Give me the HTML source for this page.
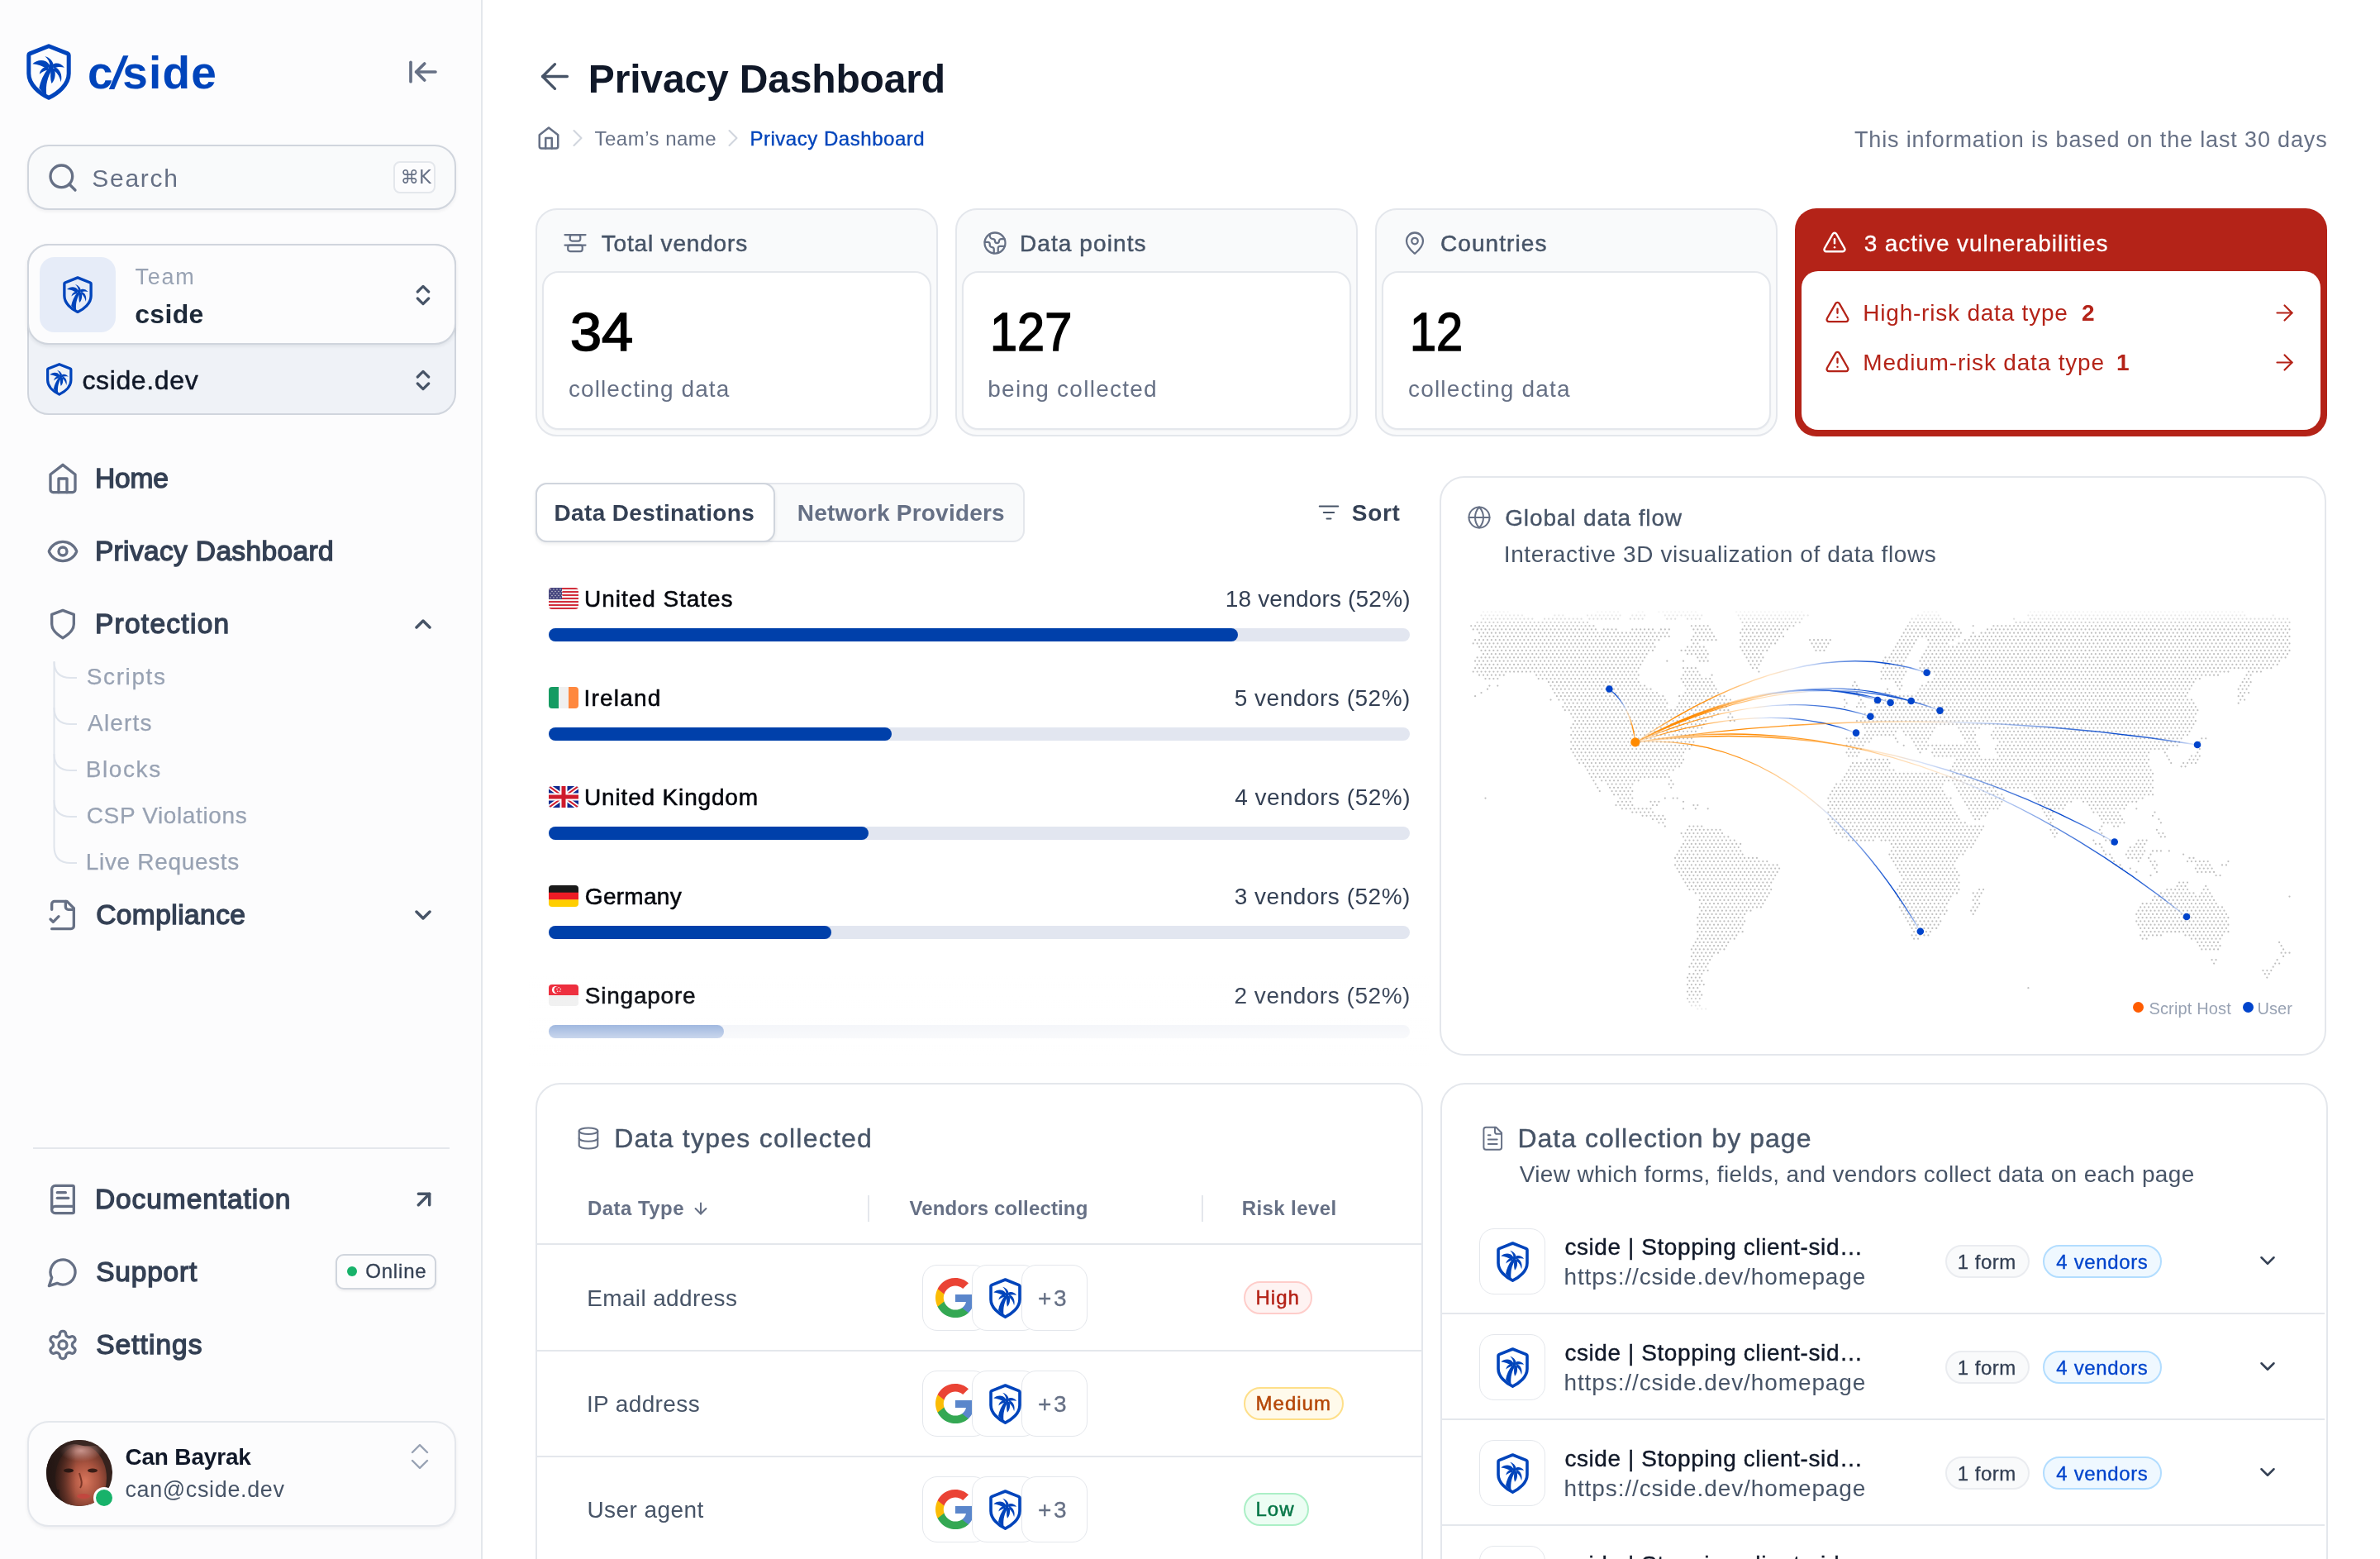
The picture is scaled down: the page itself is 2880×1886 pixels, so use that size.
<!DOCTYPE html>
<html lang="en"><head><meta charset="utf-8"><title>Privacy Dashboard</title>
<style>
html,body{margin:0;padding:0;background:#fff}
body{width:2880px;height:1886px;overflow:hidden;position:relative;font-family:"Liberation Sans",Arial,sans-serif;-webkit-font-smoothing:antialiased}
aside,main{display:block;position:absolute;left:0;top:0;width:2880px;height:1886px;will-change:transform}
.a{position:absolute;display:block}
.t{position:absolute;white-space:nowrap;display:block}
b{font-weight:700}
</style></head><body>
<aside><div class="a" style="left:0px;top:0px;width:582px;height:1886px;background:#FCFCFD;border-right:2px solid #E4E7EC"></div><svg class="a" style="left:32px;top:53px" width="54" height="68.0" viewBox="0 0 54 68"><path d="M27 2.8 L50 11.9 Q51.2 12.4 51.2 13.8 V36 C51.2 49.5 38 60 27 65.3 C16 60 2.8 49.5 2.8 36 V13.8 Q2.8 12.4 4 11.9 Z" fill="none" stroke="#0044BB" stroke-width="5" stroke-linejoin="round"/><g fill="#0044BB"><path d="M15.3 53.5 C16.8 45.5 20.5 37 26.5 29.5 L31 31.5 C26 39 22.8 49.5 24.3 62 C20.5 59.8 17.3 56.5 15.3 53.5Z"/><path d="M7.4 24.2 C11 20.5 18 18.6 23 21.1 C25.5 22.4 27.5 24.5 28.5 27 L24.2 30.2 C20 26.7 14 24.9 7.4 24.2Z"/><path d="M22.4 14.9 C27.5 16.3 32.2 20.5 32.6 25.5 L28.4 26.2 C28 21.5 26 18 22.4 14.9Z"/><path d="M31.3 25.4 C35 22.2 41.5 22.8 45.9 28.7 C41.5 27.5 37 27.5 33 29.5Z"/><path d="M26 27.6 C21 27.6 16.3 31.5 15.8 36.7 C18.5 34 22 32.2 26.8 31.4Z"/><path d="M29.6 30 C29.1 36 28.6 42.5 30.4 48.1 C34.4 44 35.8 37 33.8 30Z"/><path d="M33.3 28 C39.7 29.3 44.2 37 41.7 46.2 C40.5 40.5 38 35.7 33.6 32.4Z"/><circle cx="29.6" cy="28.2" r="3.2"/></g></svg><span class="t" style="left:106px;top:53.0px;font-size:55px;line-height:70px;color:#0044BB;font-weight:700;letter-spacing:1.2px;">c<span style="display:inline-block;transform:skewX(-13deg);margin:0 -4.5px 0 -1.5px">/</span>side</span><svg class="a" style="left:492px;top:67px" width="40" height="40" viewBox="0 0 24 24" fill="none" stroke="#667085" stroke-width="2.2" stroke-linecap="round" stroke-linejoin="round" ><path d="M3 19V5"/><path d="m13 6-6 6 6 6"/><path d="M7 12h14"/></svg><div class="a" style="left:32.5px;top:175px;width:519px;height:78.5px;box-sizing:border-box;border:2px solid #D0D5DD;border-radius:26px;background:#F9FAFB;box-shadow:0 2px 4px rgba(16,24,40,.06)"></div><svg class="a" style="left:56px;top:195px" width="40" height="40" viewBox="0 0 24 24" fill="none" stroke="#667085" stroke-width="2" stroke-linecap="round" stroke-linejoin="round" ><path d="m21 21-4.34-4.34"/><circle cx="11" cy="11" r="8"/></svg><span class="t" style="left:111.25px;top:195.5px;font-size:30px;line-height:39px;color:#667085;letter-spacing:1.73px;">Search</span><div class="a" style="left:476.3px;top:194.5px;width:51px;height:39.5px;box-sizing:border-box;border:2px solid #E4E7EC;border-radius:8px;background:#FCFCFD"></div><span class="t" style="left:484.5px;top:200.0px;font-size:22.5px;line-height:29px;color:#667085;font-family:&quot;DejaVu Sans&quot;,&quot;Liberation Sans&quot;,sans-serif;">⌘K</span><div class="a" style="left:32.5px;top:294.5px;width:519px;height:207.5px;box-sizing:border-box;border:2px solid #D0D5DD;border-radius:26px;background:#EFF2F7"></div><div class="a" style="left:32.5px;top:294.5px;width:519px;height:122.8px;box-sizing:border-box;border:2px solid #D0D5DD;border-radius:26px;background:#FCFCFD;box-shadow:0 2px 4px rgba(16,24,40,.08)"></div><div class="a" style="left:48px;top:311px;width:92px;height:91px;border-radius:18px;background:#E6ECF8"></div><svg class="a" style="left:76px;top:334px" width="36" height="45.3" viewBox="0 0 54 68"><path d="M27 2.8 L50 11.9 Q51.2 12.4 51.2 13.8 V36 C51.2 49.5 38 60 27 65.3 C16 60 2.8 49.5 2.8 36 V13.8 Q2.8 12.4 4 11.9 Z" fill="none" stroke="#0044BB" stroke-width="5" stroke-linejoin="round"/><g fill="#0044BB"><path d="M15.3 53.5 C16.8 45.5 20.5 37 26.5 29.5 L31 31.5 C26 39 22.8 49.5 24.3 62 C20.5 59.8 17.3 56.5 15.3 53.5Z"/><path d="M7.4 24.2 C11 20.5 18 18.6 23 21.1 C25.5 22.4 27.5 24.5 28.5 27 L24.2 30.2 C20 26.7 14 24.9 7.4 24.2Z"/><path d="M22.4 14.9 C27.5 16.3 32.2 20.5 32.6 25.5 L28.4 26.2 C28 21.5 26 18 22.4 14.9Z"/><path d="M31.3 25.4 C35 22.2 41.5 22.8 45.9 28.7 C41.5 27.5 37 27.5 33 29.5Z"/><path d="M26 27.6 C21 27.6 16.3 31.5 15.8 36.7 C18.5 34 22 32.2 26.8 31.4Z"/><path d="M29.6 30 C29.1 36 28.6 42.5 30.4 48.1 C34.4 44 35.8 37 33.8 30Z"/><path d="M33.3 28 C39.7 29.3 44.2 37 41.7 46.2 C40.5 40.5 38 35.7 33.6 32.4Z"/><circle cx="29.6" cy="28.2" r="3.2"/></g></svg><span class="t" style="left:163.5px;top:317.5px;font-size:27px;line-height:35px;color:#98A2B3;letter-spacing:1.75px;">Team</span><span class="t" style="left:163.25px;top:359.0px;font-size:32px;line-height:42px;color:#1D2939;font-weight:700;letter-spacing:0.3px;">cside</span><svg class="a" style="left:496px;top:341px" width="32" height="32" viewBox="0 0 24 24" fill="none" stroke="#475467" stroke-width="2.4" stroke-linecap="round" stroke-linejoin="round" ><path d="m7 15 5 5 5-5"/><path d="m7 9 5-5 5 5"/></svg><svg class="a" style="left:56px;top:439px" width="31.5" height="39.7" viewBox="0 0 54 68"><path d="M27 2.8 L50 11.9 Q51.2 12.4 51.2 13.8 V36 C51.2 49.5 38 60 27 65.3 C16 60 2.8 49.5 2.8 36 V13.8 Q2.8 12.4 4 11.9 Z" fill="none" stroke="#0044BB" stroke-width="5.5" stroke-linejoin="round"/><g fill="#0044BB"><path d="M15.3 53.5 C16.8 45.5 20.5 37 26.5 29.5 L31 31.5 C26 39 22.8 49.5 24.3 62 C20.5 59.8 17.3 56.5 15.3 53.5Z"/><path d="M7.4 24.2 C11 20.5 18 18.6 23 21.1 C25.5 22.4 27.5 24.5 28.5 27 L24.2 30.2 C20 26.7 14 24.9 7.4 24.2Z"/><path d="M22.4 14.9 C27.5 16.3 32.2 20.5 32.6 25.5 L28.4 26.2 C28 21.5 26 18 22.4 14.9Z"/><path d="M31.3 25.4 C35 22.2 41.5 22.8 45.9 28.7 C41.5 27.5 37 27.5 33 29.5Z"/><path d="M26 27.6 C21 27.6 16.3 31.5 15.8 36.7 C18.5 34 22 32.2 26.8 31.4Z"/><path d="M29.6 30 C29.1 36 28.6 42.5 30.4 48.1 C34.4 44 35.8 37 33.8 30Z"/><path d="M33.3 28 C39.7 29.3 44.2 37 41.7 46.2 C40.5 40.5 38 35.7 33.6 32.4Z"/><circle cx="29.6" cy="28.2" r="3.2"/></g></svg><span class="t" style="left:99.4px;top:438.5px;font-size:32px;line-height:42px;color:#101828;letter-spacing:0.64px;-webkit-text-stroke:0.5px #101828;">cside.dev</span><svg class="a" style="left:496px;top:444px" width="32" height="32" viewBox="0 0 24 24" fill="none" stroke="#475467" stroke-width="2.4" stroke-linecap="round" stroke-linejoin="round" ><path d="m7 15 5 5 5-5"/><path d="m7 9 5-5 5 5"/></svg><svg class="a" style="left:56.0px;top:559.0px" width="40" height="40" viewBox="0 0 24 24" fill="none" stroke="#667085" stroke-width="2" stroke-linecap="round" stroke-linejoin="round" ><path d="m3 9 9-7 9 7v11a2 2 0 0 1-2 2H5a2 2 0 0 1-2-2z"/><polyline points="9 22 9 12 15 12 15 22"/></svg><span class="t" style="left:114.92px;top:558.3px;font-size:33.5px;line-height:42px;color:#344054;letter-spacing:-0.17px;-webkit-text-stroke:1.35px #344054;">Home</span><svg class="a" style="left:56.0px;top:647.0px" width="40" height="40" viewBox="0 0 24 24" fill="none" stroke="#667085" stroke-width="2" stroke-linecap="round" stroke-linejoin="round" ><path d="M2.062 12.348a1 1 0 0 1 0-.696 10.75 10.75 0 0 1 19.876 0 1 1 0 0 1 0 .696 10.75 10.75 0 0 1-19.876 0"/><circle cx="12" cy="12" r="3"/></svg><span class="t" style="left:114.92px;top:646.3px;font-size:33.5px;line-height:42px;color:#344054;letter-spacing:0.35px;-webkit-text-stroke:1.35px #344054;">Privacy Dashboard</span><svg class="a" style="left:56.0px;top:735.0px" width="40" height="40" viewBox="0 0 24 24" fill="none" stroke="#667085" stroke-width="2" stroke-linecap="round" stroke-linejoin="round" ><path d="M12 22s8-4 8-10V5l-8-3-8 3v7c0 6 8 10 8 10"/></svg><span class="t" style="left:114.92px;top:734.3px;font-size:33.5px;line-height:42px;color:#344054;letter-spacing:1.27px;-webkit-text-stroke:1.35px #344054;">Protection</span><svg class="a" style="left:56.0px;top:1087.0px" width="40" height="40" viewBox="0 0 24 24" fill="none" stroke="#667085" stroke-width="2" stroke-linecap="round" stroke-linejoin="round" ><path d="M4 22h14a2 2 0 0 0 2-2V7l-5-5H6a2 2 0 0 0-2 2v4"/><path d="M14 2v4a2 2 0 0 0 2 2h4"/><path d="m3 15 2 2 4-4"/></svg><span class="t" style="left:116.17px;top:1086.3px;font-size:33.5px;line-height:42px;color:#344054;letter-spacing:0.44px;-webkit-text-stroke:1.35px #344054;">Compliance</span><svg class="a" style="left:496px;top:739px" width="32" height="32" viewBox="0 0 24 24" fill="none" stroke="#475467" stroke-width="2.6" stroke-linecap="round" stroke-linejoin="round" ><path d="m18 15-6-6-6 6"/></svg><svg class="a" style="left:496px;top:1091px" width="32" height="32" viewBox="0 0 24 24" fill="none" stroke="#475467" stroke-width="2.6" stroke-linecap="round" stroke-linejoin="round" ><path d="m6 9 6 6 6-6"/></svg><svg class="a" style="left:56.8px;top:798px" width="50" height="260" viewBox="0 0 50 260" fill="none" stroke="#DFE4EC" stroke-width="2"><path d="M8.5 3 V226 Q8.5 246 28.5 246 H36"/><path d="M8.5 2 Q8.5 22 28.5 22 H36"/><path d="M8.5 58 Q8.5 78 28.5 78 H36"/><path d="M8.5 114 Q8.5 134 28.5 134 H36"/><path d="M8.5 170 Q8.5 190 28.5 190 H36"/></svg><span class="t" style="left:104.78px;top:801.0px;font-size:28px;line-height:36px;color:#98A2B3;letter-spacing:1.6px;-webkit-text-stroke:0.25px #98A2B3;">Scripts</span><span class="t" style="left:106.03px;top:857.0px;font-size:28px;line-height:36px;color:#98A2B3;letter-spacing:1.19px;-webkit-text-stroke:0.25px #98A2B3;">Alerts</span><span class="t" style="left:103.78px;top:913.0px;font-size:28px;line-height:36px;color:#98A2B3;letter-spacing:1.58px;-webkit-text-stroke:0.25px #98A2B3;">Blocks</span><span class="t" style="left:104.78px;top:969.0px;font-size:28px;line-height:36px;color:#98A2B3;letter-spacing:0.63px;-webkit-text-stroke:0.25px #98A2B3;">CSP Violations</span><span class="t" style="left:103.78px;top:1025.0px;font-size:28px;line-height:36px;color:#98A2B3;letter-spacing:0.67px;-webkit-text-stroke:0.25px #98A2B3;">Live Requests</span><div class="a" style="left:40px;top:1388px;width:504px;height:2px;background:#E4E7EC"></div><svg class="a" style="left:56.0px;top:1431.0px" width="40" height="40" viewBox="0 0 24 24" fill="none" stroke="#667085" stroke-width="2" stroke-linecap="round" stroke-linejoin="round" ><path d="M4 19.5v-15A2.5 2.5 0 0 1 6.5 2H19a1 1 0 0 1 1 1v18a1 1 0 0 1-1 1H6.5a1 1 0 0 1 0-5H20"/><path d="M8 11h8"/><path d="M8 7h6"/></svg><span class="t" style="left:114.92px;top:1430.3px;font-size:33.5px;line-height:42px;color:#344054;letter-spacing:0.93px;-webkit-text-stroke:1.35px #344054;">Documentation</span><svg class="a" style="left:56.0px;top:1519.0px" width="40" height="40" viewBox="0 0 24 24" fill="none" stroke="#667085" stroke-width="2" stroke-linecap="round" stroke-linejoin="round" ><path d="M7.9 20A9 9 0 1 0 4 16.1L2 22Z"/></svg><span class="t" style="left:116.17px;top:1518.3px;font-size:33.5px;line-height:42px;color:#344054;letter-spacing:0.8px;-webkit-text-stroke:1.35px #344054;">Support</span><svg class="a" style="left:56.0px;top:1607.0px" width="40" height="40" viewBox="0 0 24 24" fill="none" stroke="#667085" stroke-width="2" stroke-linecap="round" stroke-linejoin="round" ><path d="M12.22 2h-.44a2 2 0 0 0-2 2v.18a2 2 0 0 1-1 1.73l-.43.25a2 2 0 0 1-2 0l-.15-.08a2 2 0 0 0-2.73.73l-.22.38a2 2 0 0 0 .73 2.73l.15.1a2 2 0 0 1 1 1.72v.51a2 2 0 0 1-1 1.74l-.15.09a2 2 0 0 0-.73 2.73l.22.38a2 2 0 0 0 2.73.73l.15-.08a2 2 0 0 1 2 0l.43.25a2 2 0 0 1 1 1.73V20a2 2 0 0 0 2 2h.44a2 2 0 0 0 2-2v-.18a2 2 0 0 1 1-1.73l.43-.25a2 2 0 0 1 2 0l.15.08a2 2 0 0 0 2.73-.73l.22-.39a2 2 0 0 0-.73-2.73l-.15-.08a2 2 0 0 1-1-1.74v-.5a2 2 0 0 1 1-1.74l.15-.09a2 2 0 0 0 .73-2.73l-.22-.38a2 2 0 0 0-2.73-.73l-.15.08a2 2 0 0 1-2 0l-.43-.25a2 2 0 0 1-1-1.73V4a2 2 0 0 0-2-2z"/><circle cx="12" cy="12" r="3"/></svg><span class="t" style="left:116.17px;top:1606.3px;font-size:33.5px;line-height:42px;color:#344054;letter-spacing:1.05px;-webkit-text-stroke:1.35px #344054;">Settings</span><svg class="a" style="left:497px;top:1435px" width="32" height="32" viewBox="0 0 24 24" fill="none" stroke="#475467" stroke-width="2.6" stroke-linecap="round" stroke-linejoin="round" ><path d="M7 7h10v10"/><path d="M7 17 17 7"/></svg><div class="a" style="left:406px;top:1517px;width:122px;height:43px;box-sizing:border-box;border:2px solid #D0D5DD;border-radius:10px;background:#FCFCFD;box-shadow:0 2px 3px rgba(16,24,40,.06)"></div><div class="a" style="left:420px;top:1532px;width:12px;height:12px;border-radius:50%;background:#17B26A"></div><span class="t" style="left:442.25px;top:1522.0px;font-size:24px;line-height:31px;color:#344054;letter-spacing:0.8px;-webkit-text-stroke:0.3px #344054;">Online</span><div class="a" style="left:32.5px;top:1718.5px;width:519px;height:128px;box-sizing:border-box;border:2px solid #E4E7EC;border-radius:26px;background:#FCFCFD;box-shadow:0 2px 4px rgba(16,24,40,.06)"></div><svg class="a" style="left:56px;top:1742px" width="80" height="80" viewBox="0 0 80 80"><defs><clipPath id="av"><circle cx="40" cy="40" r="40"/></clipPath><radialGradient id="af" cx=".58" cy=".55" r=".6"><stop offset="0" stop-color="#d8765c"/><stop offset=".45" stop-color="#a9533f"/><stop offset="1" stop-color="#4a261d"/></radialGradient><radialGradient id="ah" cx=".5" cy=".5" r=".5"><stop offset="0" stop-color="#c9948c"/><stop offset="1" stop-color="#c9948c" stop-opacity="0"/></radialGradient><linearGradient id="as" x1="0" x2="1"><stop offset="0" stop-color="#1d1210" stop-opacity=".85"/><stop offset=".45" stop-color="#1d1210" stop-opacity="0"/></linearGradient></defs><g clip-path="url(#av)"><rect width="80" height="80" fill="#35221d"/><ellipse cx="42" cy="46" rx="31" ry="40" fill="url(#af)"/><ellipse cx="42" cy="13" rx="26" ry="13" fill="url(#ah)"/><path d="M0 0H80V14C66 2 52 10 40 6C26 2 12 12 4 30L0 40Z" fill="#3a2722"/><rect width="80" height="80" fill="url(#as)"/><ellipse cx="27" cy="37" rx="6" ry="2.6" fill="#2a1713"/><ellipse cx="56" cy="37" rx="6" ry="2.6" fill="#3a1d16"/><path d="M40 40C43 50 44 54 41 58" stroke="#7a3526" stroke-width="2" fill="none"/><ellipse cx="45" cy="68" rx="8" ry="3" fill="#c2473f"/><rect x="0" y="60" width="16" height="20" fill="#221613" opacity=".7"/></g></svg><div class="a" style="left:113px;top:1799px;width:20px;height:20px;border-radius:50%;background:#17B26A;border:3px solid #FCFCFD"></div><span class="t" style="left:151.4px;top:1744.5px;font-size:28px;line-height:36px;color:#101828;font-weight:700;letter-spacing:-0.18px;">Can Bayrak</span><span class="t" style="left:151.4px;top:1785.0px;font-size:27px;line-height:35px;color:#475467;letter-spacing:0.63px;">can@cside.dev</span><svg class="a" style="left:494px;top:1744px" width="28" height="36" viewBox="0 0 28 36" fill="none" stroke="#98A2B3" stroke-width="2.4" stroke-linecap="round" stroke-linejoin="round"><path d="M5 13 14 4 23 13"/><path d="M5 23 14 32 23 23"/></svg></aside>
<main><svg class="a" style="left:646.3px;top:66.7px" width="51" height="51" viewBox="0 0 24 24" fill="none" stroke="#475467" stroke-width="1.55" stroke-linecap="round" stroke-linejoin="round" ><path d="m12 19-7-7 7-7"/><path d="M19 12H5"/></svg><span class="t" style="left:711.8px;top:66.0px;font-size:48px;line-height:60px;color:#101828;font-weight:700;letter-spacing:-0.16px;">Privacy Dashboard</span><svg class="a" style="left:649px;top:151.5px" width="30" height="30" viewBox="0 0 24 24" fill="none" stroke="#667085" stroke-width="2" stroke-linecap="round" stroke-linejoin="round" ><path d="m3 9 9-7 9 7v11a2 2 0 0 1-2 2H5a2 2 0 0 1-2-2z"/><polyline points="9 22 9 12 15 12 15 22"/></svg><svg class="a" style="left:681.4px;top:148.7px" width="36" height="36" viewBox="0 0 24 24" fill="none" stroke="#D0D5DD" stroke-width="1.4" stroke-linecap="round" stroke-linejoin="round" ><path d="m9 18 6-6-6-6"/></svg><span class="t" style="left:719.5px;top:151.5px;font-size:24px;line-height:31px;color:#667085;letter-spacing:0.49px;">Team’s name</span><svg class="a" style="left:869.4px;top:148.7px" width="36" height="36" viewBox="0 0 24 24" fill="none" stroke="#D0D5DD" stroke-width="1.4" stroke-linecap="round" stroke-linejoin="round" ><path d="m9 18 6-6-6-6"/></svg><span class="t" style="left:907.42px;top:151.5px;font-size:24px;line-height:31px;color:#0044BB;letter-spacing:0.53px;-webkit-text-stroke:0.35px #0044BB;">Privacy Dashboard</span><span class="t" style="left:2244.0px;top:152.0px;font-size:27px;line-height:35px;color:#667085;letter-spacing:0.85px;">This information is based on the last 30 days</span><div class="a" style="left:648px;top:252px;width:487.2px;height:276px;box-sizing:border-box;border:2px solid #E4E7EC;border-radius:26px;background:#F9FAFB"></div><div class="a" style="left:656px;top:328px;width:471.2px;height:192px;box-sizing:border-box;border:2px solid #E4E7EC;border-radius:20px;background:#fff;box-shadow:0 1px 2px rgba(16,24,40,.04)"></div><svg class="a" style="left:680.5px;top:279.0px" width="30" height="30" viewBox="0 0 24 24" fill="none" stroke="#667085" stroke-width="1.8" stroke-linecap="round" stroke-linejoin="round" ><rect width="14" height="6" x="5" y="14" rx="2"/><rect width="10" height="6" x="7" y="4" rx="2"/><path d="M2 14h20"/><path d="M2 4h20"/></svg><span class="t" style="left:727.75px;top:277.0px;font-size:28px;line-height:36px;color:#475467;letter-spacing:0.82px;-webkit-text-stroke:0.5px #475467;">Total vendors</span><span class="t" style="left:689.5px;top:364.0px;font-size:64px;line-height:76px;color:#000;-webkit-text-stroke:1.6px #000;transform-origin:0 50%;transform:scaleX(1.070);">34</span><span class="t" style="left:688.0px;top:453.0px;font-size:28px;line-height:36px;color:#667085;letter-spacing:1.09px;">collecting data</span><div class="a" style="left:1156px;top:252px;width:487.2px;height:276px;box-sizing:border-box;border:2px solid #E4E7EC;border-radius:26px;background:#F9FAFB"></div><div class="a" style="left:1164px;top:328px;width:471.2px;height:192px;box-sizing:border-box;border:2px solid #E4E7EC;border-radius:20px;background:#fff;box-shadow:0 1px 2px rgba(16,24,40,.04)"></div><svg class="a" style="left:1188.5px;top:279.0px" width="30" height="30" viewBox="0 0 24 24" fill="none" stroke="#667085" stroke-width="1.8" stroke-linecap="round" stroke-linejoin="round" ><path d="M21.54 15H17a2 2 0 0 0-2 2v4.54"/><path d="M7 3.34V5a3 3 0 0 0 3 3a2 2 0 0 1 2 2c0 1.1.9 2 2 2a2 2 0 0 0 2-2c0-1.1.9-2 2-2h3.17"/><path d="M11 21.95V18a2 2 0 0 0-2-2a2 2 0 0 1-2-2v-1a2 2 0 0 0-2-2H2.05"/><circle cx="12" cy="12" r="10"/></svg><span class="t" style="left:1234.0px;top:277.0px;font-size:28px;line-height:36px;color:#475467;letter-spacing:1.09px;-webkit-text-stroke:0.5px #475467;">Data points</span><span class="t" style="left:1197.5px;top:364.0px;font-size:64px;line-height:76px;color:#000;-webkit-text-stroke:1.6px #000;transform-origin:0 50%;transform:scaleX(0.929);">127</span><span class="t" style="left:1195.25px;top:453.0px;font-size:28px;line-height:36px;color:#667085;letter-spacing:1.26px;">being collected</span><div class="a" style="left:1664px;top:252px;width:487.2px;height:276px;box-sizing:border-box;border:2px solid #E4E7EC;border-radius:26px;background:#F9FAFB"></div><div class="a" style="left:1672px;top:328px;width:471.2px;height:192px;box-sizing:border-box;border:2px solid #E4E7EC;border-radius:20px;background:#fff;box-shadow:0 1px 2px rgba(16,24,40,.04)"></div><svg class="a" style="left:1696.5px;top:279.0px" width="30" height="30" viewBox="0 0 24 24" fill="none" stroke="#667085" stroke-width="1.8" stroke-linecap="round" stroke-linejoin="round" ><path d="M20 10c0 4.993-5.539 10.193-7.399 11.799a1 1 0 0 1-1.202 0C9.539 20.193 4 14.993 4 10a8 8 0 0 1 16 0"/><circle cx="12" cy="10" r="3"/></svg><span class="t" style="left:1743.0px;top:277.0px;font-size:28px;line-height:36px;color:#475467;letter-spacing:1.07px;-webkit-text-stroke:0.5px #475467;">Countries</span><span class="t" style="left:1705.5px;top:364.0px;font-size:64px;line-height:76px;color:#000;-webkit-text-stroke:1.6px #000;transform-origin:0 50%;transform:scaleX(0.900);">12</span><span class="t" style="left:1704.0px;top:453.0px;font-size:28px;line-height:36px;color:#667085;letter-spacing:1.19px;">collecting data</span><div class="a" style="left:2172px;top:252.3px;width:644px;height:275.7px;border-radius:26px;background:#B42318"></div><div class="a" style="left:2180px;top:328px;width:628px;height:191.7px;border-radius:20px;background:#fff"></div><svg class="a" style="left:2205.0px;top:278.0px" width="30" height="30" viewBox="0 0 24 24" fill="none" stroke="#fff" stroke-width="2" stroke-linecap="round" stroke-linejoin="round" ><path d="m21.73 18-8-14a2 2 0 0 0-3.48 0l-8 14A2 2 0 0 0 4 21h16a2 2 0 0 0 1.73-3"/><path d="M12 9v4"/><path d="M12 17h.01"/></svg><span class="t" style="left:2255.65px;top:277.0px;font-size:28px;line-height:36px;color:#fff;letter-spacing:0.91px;-webkit-text-stroke:0.3px #fff;">3 active vulnerabilities</span><svg class="a" style="left:2208.0px;top:362.0px" width="31" height="31" viewBox="0 0 24 24" fill="none" stroke="#B42318" stroke-width="1.8" stroke-linecap="round" stroke-linejoin="round" ><path d="m21.73 18-8-14a2 2 0 0 0-3.48 0l-8 14A2 2 0 0 0 4 21h16a2 2 0 0 0 1.73-3"/><path d="M12 9v4"/><path d="M12 17h.01"/></svg><span class="t" style="left:2254.25px;top:361.0px;font-size:28px;line-height:36px;color:#B42318;letter-spacing:0.79px;">High-risk data type</span><span class="t" style="left:2519px;top:361.0px;font-size:28px;line-height:36px;color:#B42318;font-weight:700;">2</span><svg class="a" style="left:2748.5px;top:362.5px" width="31" height="31" viewBox="0 0 24 24" fill="none" stroke="#B42318" stroke-width="1.7" stroke-linecap="round" stroke-linejoin="round" ><path d="M5 12h14"/><path d="m12 5 7 7-7 7"/></svg><svg class="a" style="left:2208.0px;top:422.0px" width="31" height="31" viewBox="0 0 24 24" fill="none" stroke="#B42318" stroke-width="1.8" stroke-linecap="round" stroke-linejoin="round" ><path d="m21.73 18-8-14a2 2 0 0 0-3.48 0l-8 14A2 2 0 0 0 4 21h16a2 2 0 0 0 1.73-3"/><path d="M12 9v4"/><path d="M12 17h.01"/></svg><span class="t" style="left:2254.25px;top:421.0px;font-size:28px;line-height:36px;color:#B42318;letter-spacing:0.82px;">Medium-risk data type</span><span class="t" style="left:2561px;top:421.0px;font-size:28px;line-height:36px;color:#B42318;font-weight:700;">1</span><svg class="a" style="left:2748.5px;top:422.5px" width="31" height="31" viewBox="0 0 24 24" fill="none" stroke="#B42318" stroke-width="1.7" stroke-linecap="round" stroke-linejoin="round" ><path d="M5 12h14"/><path d="m12 5 7 7-7 7"/></svg><div class="a" style="left:648px;top:584px;width:592px;height:72px;box-sizing:border-box;border:2px solid #E4E7EC;border-radius:14px;background:#F9FAFB"></div><div class="a" style="left:648px;top:584px;width:290px;height:72px;box-sizing:border-box;border:2px solid #D0D5DD;border-radius:14px;background:#fff;box-shadow:0 2px 4px rgba(16,24,40,.08)"></div><span class="t" style="left:670.45px;top:603.0px;font-size:28px;line-height:36px;color:#344054;font-weight:700;letter-spacing:0.37px;">Data Destinations</span><span class="t" style="left:964.75px;top:603.0px;font-size:28px;line-height:36px;color:#667085;font-weight:700;letter-spacing:0.22px;">Network Providers</span><svg class="a" style="left:1592.5px;top:605.0px" width="30" height="30" viewBox="0 0 24 24" fill="none" stroke="#475467" stroke-width="1.6" stroke-linecap="round" stroke-linejoin="round" ><path d="M3 6h18"/><path d="M7 12h10"/><path d="M10 18h4"/></svg><span class="t" style="left:1635.85px;top:603.0px;font-size:28px;line-height:36px;color:#344054;font-weight:700;letter-spacing:0.67px;">Sort</span><svg class="a" style="left:664px;top:711px;border-radius:4px" width="36" height="26" viewBox="0 0 36 26"><rect y="0" width="36" height="2" fill="#D22F3D"/><rect y="2" width="36" height="2" fill="#F5F5F5"/><rect y="4" width="36" height="2" fill="#D22F3D"/><rect y="6" width="36" height="2" fill="#F5F5F5"/><rect y="8" width="36" height="2" fill="#D22F3D"/><rect y="10" width="36" height="2" fill="#F5F5F5"/><rect y="12" width="36" height="2" fill="#D22F3D"/><rect y="14" width="36" height="2" fill="#F5F5F5"/><rect y="16" width="36" height="2" fill="#D22F3D"/><rect y="18" width="36" height="2" fill="#F5F5F5"/><rect y="20" width="36" height="2" fill="#D22F3D"/><rect y="22" width="36" height="2" fill="#F5F5F5"/><rect y="24" width="36" height="2" fill="#D22F3D"/><rect width="16" height="14" fill="#46467F"/><circle cx="2" cy="2.0" r=".7" fill="#ddd"/><circle cx="6" cy="2.0" r=".7" fill="#ddd"/><circle cx="10" cy="2.0" r=".7" fill="#ddd"/><circle cx="14" cy="2.0" r=".7" fill="#ddd"/><circle cx="4" cy="4.5" r=".7" fill="#ddd"/><circle cx="8" cy="4.5" r=".7" fill="#ddd"/><circle cx="12" cy="4.5" r=".7" fill="#ddd"/><circle cx="16" cy="4.5" r=".7" fill="#ddd"/><circle cx="2" cy="7.0" r=".7" fill="#ddd"/><circle cx="6" cy="7.0" r=".7" fill="#ddd"/><circle cx="10" cy="7.0" r=".7" fill="#ddd"/><circle cx="14" cy="7.0" r=".7" fill="#ddd"/><circle cx="4" cy="9.5" r=".7" fill="#ddd"/><circle cx="8" cy="9.5" r=".7" fill="#ddd"/><circle cx="12" cy="9.5" r=".7" fill="#ddd"/><circle cx="16" cy="9.5" r=".7" fill="#ddd"/><circle cx="2" cy="12.0" r=".7" fill="#ddd"/><circle cx="6" cy="12.0" r=".7" fill="#ddd"/><circle cx="10" cy="12.0" r=".7" fill="#ddd"/><circle cx="14" cy="12.0" r=".7" fill="#ddd"/></svg><span class="t" style="left:707.07px;top:707.0px;font-size:28px;line-height:36px;color:#05070d;letter-spacing:0.95px;-webkit-text-stroke:0.55px #05070d;">United States</span><span class="t" style="left:1482.7px;top:707.0px;font-size:28px;line-height:36px;color:#344054;letter-spacing:0.19px;">18 vendors (52%)</span><div class="a" style="left:664px;top:760px;width:1042px;height:16px;border-radius:8px;background:#E2E6F0"></div><div class="a" style="left:664px;top:760px;width:833.5px;height:16px;border-radius:8px;background:#0040AA"></div><svg class="a" style="left:664px;top:831px;border-radius:4px" width="36" height="26" viewBox="0 0 36 26"><rect width="12" height="26" fill="#169B62"/><rect x="12" width="12" height="26" fill="#F0F0F0"/><rect x="24" width="12" height="26" fill="#FF883E"/></svg><span class="t" style="left:706.57px;top:827.0px;font-size:28px;line-height:36px;color:#05070d;letter-spacing:1.19px;-webkit-text-stroke:0.55px #05070d;">Ireland</span><span class="t" style="left:1493.7px;top:827.0px;font-size:28px;line-height:36px;color:#344054;letter-spacing:0.52px;">5 vendors (52%)</span><div class="a" style="left:664px;top:880px;width:1042px;height:16px;border-radius:8px;background:#E2E6F0"></div><div class="a" style="left:664px;top:880px;width:415px;height:16px;border-radius:8px;background:#0040AA"></div><svg class="a" style="left:664px;top:951px;border-radius:4px" width="36" height="26" viewBox="0 0 36 26"><rect width="36" height="26" fill="#10298E"/><path d="M0 0 36 26M36 0 0 26" stroke="#fff" stroke-width="5.5"/><path d="M0 0 36 26M36 0 0 26" stroke="#CF1B2B" stroke-width="2"/><path d="M18 0V26M0 13H36" stroke="#fff" stroke-width="9"/><path d="M18 0V26M0 13H36" stroke="#CF1B2B" stroke-width="5"/></svg><span class="t" style="left:707.07px;top:947.0px;font-size:28px;line-height:36px;color:#05070d;letter-spacing:0.83px;-webkit-text-stroke:0.55px #05070d;">United Kingdom</span><span class="t" style="left:1494.2px;top:947.0px;font-size:28px;line-height:36px;color:#344054;letter-spacing:0.49px;">4 vendors (52%)</span><div class="a" style="left:664px;top:1000px;width:1042px;height:16px;border-radius:8px;background:#E2E6F0"></div><div class="a" style="left:664px;top:1000px;width:387px;height:16px;border-radius:8px;background:#0040AA"></div><svg class="a" style="left:664px;top:1071px;border-radius:4px" width="36" height="26" viewBox="0 0 36 26"><rect width="36" height="9" fill="#1a1a1a"/><rect y="8.7" width="36" height="9" fill="#EE1C25"/><rect y="17.3" width="36" height="8.7" fill="#FFCE00"/></svg><span class="t" style="left:707.82px;top:1067.0px;font-size:28px;line-height:36px;color:#05070d;letter-spacing:0.29px;-webkit-text-stroke:0.55px #05070d;">Germany</span><span class="t" style="left:1493.7px;top:1067.0px;font-size:28px;line-height:36px;color:#344054;letter-spacing:0.52px;">3 vendors (52%)</span><div class="a" style="left:664px;top:1120px;width:1042px;height:16px;border-radius:8px;background:#E2E6F0"></div><div class="a" style="left:664px;top:1120px;width:341.5px;height:16px;border-radius:8px;background:#0040AA"></div><svg class="a" style="left:664px;top:1191px;border-radius:4px" width="36" height="26" viewBox="0 0 36 26"><rect width="36" height="13" fill="#ED2939"/><rect y="13" width="36" height="13" fill="#F0F0F0"/><circle cx="8.5" cy="6.5" r="4.6" fill="#fff"/><circle cx="10.6" cy="6.5" r="4.2" fill="#ED2939"/><g fill="#fff"><circle cx="12.2" cy="3.8" r=".75"/><circle cx="10" cy="5.6" r=".75"/><circle cx="14.4" cy="5.6" r=".75"/><circle cx="10.8" cy="8.3" r=".75"/><circle cx="13.6" cy="8.3" r=".75"/></g></svg><span class="t" style="left:707.82px;top:1187.0px;font-size:28px;line-height:36px;color:#05070d;letter-spacing:0.76px;-webkit-text-stroke:0.55px #05070d;">Singapore</span><span class="t" style="left:1493.45px;top:1187.0px;font-size:28px;line-height:36px;color:#344054;letter-spacing:0.54px;">2 vendors (52%)</span><div class="a" style="left:664px;top:1240px;width:1042px;height:16px;border-radius:8px;background:#E2E6F0"></div><div class="a" style="left:664px;top:1240px;width:212px;height:16px;border-radius:8px;background:#0040AA"></div><div class="a" style="left:640px;top:1180px;width:1090px;height:110px;background:linear-gradient(to bottom,rgba(255,255,255,0) 0%,rgba(255,255,255,.08) 40%,rgba(255,255,255,.6) 52%,rgba(255,255,255,.8) 70%,rgba(255,255,255,1) 100%)"></div><div class="a" style="left:1742px;top:576px;width:1073.4px;height:701px;box-sizing:border-box;border:2px solid #E4E7EC;border-radius:30px;background:#fff"></div><svg class="a" style="left:1775.0px;top:611.0px" width="30" height="30" viewBox="0 0 24 24" fill="none" stroke="#667085" stroke-width="1.6" stroke-linecap="round" stroke-linejoin="round" ><circle cx="12" cy="12" r="10"/><path d="M12 2a14.5 14.5 0 0 0 0 20 14.5 14.5 0 0 0 0-20"/><path d="M2 12h20"/></svg><span class="t" style="left:1821.22px;top:609.0px;font-size:28px;line-height:36px;color:#475467;letter-spacing:0.87px;-webkit-text-stroke:0.35px #475467;">Global data flow</span><span class="t" style="left:1819.8px;top:653.0px;font-size:28px;line-height:36px;color:#475467;letter-spacing:0.61px;">Interactive 3D visualization of data flows</span><svg class="a" style="left:0;top:0" width="2880" height="1300" viewBox="0 0 2880 1300"><defs><linearGradient id="g0" gradientUnits="userSpaceOnUse" x1="1978.8" y1="897.9" x2="1947.4" y2="833.5"><stop offset="0" stop-color="#FF8A00" stop-opacity=".05"/><stop offset=".06" stop-color="#FF8A00" stop-opacity=".35"/><stop offset=".16" stop-color="#FF8A00"/><stop offset=".28" stop-color="#FF8A00" stop-opacity=".85"/><stop offset=".42" stop-color="#FF8A00" stop-opacity=".35"/><stop offset=".5" stop-color="#FF8A00" stop-opacity=".22"/><stop offset=".58" stop-color="#9DB8EE" stop-opacity=".4"/><stop offset=".75" stop-color="#0044CC" stop-opacity=".65"/><stop offset=".88" stop-color="#0044CC"/><stop offset=".95" stop-color="#0044CC" stop-opacity=".6"/><stop offset="1" stop-color="#0044CC" stop-opacity=".05"/></linearGradient><linearGradient id="g1" gradientUnits="userSpaceOnUse" x1="1978.8" y1="897.9" x2="2331.6" y2="813.7"><stop offset="0" stop-color="#FF8A00" stop-opacity=".05"/><stop offset=".06" stop-color="#FF8A00" stop-opacity=".35"/><stop offset=".16" stop-color="#FF8A00"/><stop offset=".28" stop-color="#FF8A00" stop-opacity=".85"/><stop offset=".42" stop-color="#FF8A00" stop-opacity=".35"/><stop offset=".5" stop-color="#FF8A00" stop-opacity=".22"/><stop offset=".58" stop-color="#9DB8EE" stop-opacity=".4"/><stop offset=".75" stop-color="#0044CC" stop-opacity=".65"/><stop offset=".88" stop-color="#0044CC"/><stop offset=".95" stop-color="#0044CC" stop-opacity=".6"/><stop offset="1" stop-color="#0044CC" stop-opacity=".05"/></linearGradient><linearGradient id="g2" gradientUnits="userSpaceOnUse" x1="1978.8" y1="897.9" x2="2272" y2="847"><stop offset="0" stop-color="#FF8A00" stop-opacity=".05"/><stop offset=".06" stop-color="#FF8A00" stop-opacity=".35"/><stop offset=".16" stop-color="#FF8A00"/><stop offset=".28" stop-color="#FF8A00" stop-opacity=".85"/><stop offset=".42" stop-color="#FF8A00" stop-opacity=".35"/><stop offset=".5" stop-color="#FF8A00" stop-opacity=".22"/><stop offset=".58" stop-color="#9DB8EE" stop-opacity=".4"/><stop offset=".75" stop-color="#0044CC" stop-opacity=".65"/><stop offset=".88" stop-color="#0044CC"/><stop offset=".95" stop-color="#0044CC" stop-opacity=".6"/><stop offset="1" stop-color="#0044CC" stop-opacity=".05"/></linearGradient><linearGradient id="g3" gradientUnits="userSpaceOnUse" x1="1978.8" y1="897.9" x2="2287.6" y2="850"><stop offset="0" stop-color="#FF8A00" stop-opacity=".05"/><stop offset=".06" stop-color="#FF8A00" stop-opacity=".35"/><stop offset=".16" stop-color="#FF8A00"/><stop offset=".28" stop-color="#FF8A00" stop-opacity=".85"/><stop offset=".42" stop-color="#FF8A00" stop-opacity=".35"/><stop offset=".5" stop-color="#FF8A00" stop-opacity=".22"/><stop offset=".58" stop-color="#9DB8EE" stop-opacity=".4"/><stop offset=".75" stop-color="#0044CC" stop-opacity=".65"/><stop offset=".88" stop-color="#0044CC"/><stop offset=".95" stop-color="#0044CC" stop-opacity=".6"/><stop offset="1" stop-color="#0044CC" stop-opacity=".05"/></linearGradient><linearGradient id="g4" gradientUnits="userSpaceOnUse" x1="1978.8" y1="897.9" x2="2312.7" y2="848"><stop offset="0" stop-color="#FF8A00" stop-opacity=".05"/><stop offset=".06" stop-color="#FF8A00" stop-opacity=".35"/><stop offset=".16" stop-color="#FF8A00"/><stop offset=".28" stop-color="#FF8A00" stop-opacity=".85"/><stop offset=".42" stop-color="#FF8A00" stop-opacity=".35"/><stop offset=".5" stop-color="#FF8A00" stop-opacity=".22"/><stop offset=".58" stop-color="#9DB8EE" stop-opacity=".4"/><stop offset=".75" stop-color="#0044CC" stop-opacity=".65"/><stop offset=".88" stop-color="#0044CC"/><stop offset=".95" stop-color="#0044CC" stop-opacity=".6"/><stop offset="1" stop-color="#0044CC" stop-opacity=".05"/></linearGradient><linearGradient id="g5" gradientUnits="userSpaceOnUse" x1="1978.8" y1="897.9" x2="2347.5" y2="859.6"><stop offset="0" stop-color="#FF8A00" stop-opacity=".05"/><stop offset=".06" stop-color="#FF8A00" stop-opacity=".35"/><stop offset=".16" stop-color="#FF8A00"/><stop offset=".28" stop-color="#FF8A00" stop-opacity=".85"/><stop offset=".42" stop-color="#FF8A00" stop-opacity=".35"/><stop offset=".5" stop-color="#FF8A00" stop-opacity=".22"/><stop offset=".58" stop-color="#9DB8EE" stop-opacity=".4"/><stop offset=".75" stop-color="#0044CC" stop-opacity=".65"/><stop offset=".88" stop-color="#0044CC"/><stop offset=".95" stop-color="#0044CC" stop-opacity=".6"/><stop offset="1" stop-color="#0044CC" stop-opacity=".05"/></linearGradient><linearGradient id="g6" gradientUnits="userSpaceOnUse" x1="1978.8" y1="897.9" x2="2263.4" y2="866.8"><stop offset="0" stop-color="#FF8A00" stop-opacity=".05"/><stop offset=".06" stop-color="#FF8A00" stop-opacity=".35"/><stop offset=".16" stop-color="#FF8A00"/><stop offset=".28" stop-color="#FF8A00" stop-opacity=".85"/><stop offset=".42" stop-color="#FF8A00" stop-opacity=".35"/><stop offset=".5" stop-color="#FF8A00" stop-opacity=".22"/><stop offset=".58" stop-color="#9DB8EE" stop-opacity=".4"/><stop offset=".75" stop-color="#0044CC" stop-opacity=".65"/><stop offset=".88" stop-color="#0044CC"/><stop offset=".95" stop-color="#0044CC" stop-opacity=".6"/><stop offset="1" stop-color="#0044CC" stop-opacity=".05"/></linearGradient><linearGradient id="g7" gradientUnits="userSpaceOnUse" x1="1978.8" y1="897.9" x2="2246" y2="886.6"><stop offset="0" stop-color="#FF8A00" stop-opacity=".05"/><stop offset=".06" stop-color="#FF8A00" stop-opacity=".35"/><stop offset=".16" stop-color="#FF8A00"/><stop offset=".28" stop-color="#FF8A00" stop-opacity=".85"/><stop offset=".42" stop-color="#FF8A00" stop-opacity=".35"/><stop offset=".5" stop-color="#FF8A00" stop-opacity=".22"/><stop offset=".58" stop-color="#9DB8EE" stop-opacity=".4"/><stop offset=".75" stop-color="#0044CC" stop-opacity=".65"/><stop offset=".88" stop-color="#0044CC"/><stop offset=".95" stop-color="#0044CC" stop-opacity=".6"/><stop offset="1" stop-color="#0044CC" stop-opacity=".05"/></linearGradient><linearGradient id="g8" gradientUnits="userSpaceOnUse" x1="1978.8" y1="897.9" x2="2659" y2="901"><stop offset="0" stop-color="#FF8A00" stop-opacity=".05"/><stop offset=".06" stop-color="#FF8A00" stop-opacity=".35"/><stop offset=".16" stop-color="#FF8A00"/><stop offset=".28" stop-color="#FF8A00" stop-opacity=".85"/><stop offset=".42" stop-color="#FF8A00" stop-opacity=".35"/><stop offset=".5" stop-color="#FF8A00" stop-opacity=".22"/><stop offset=".58" stop-color="#9DB8EE" stop-opacity=".4"/><stop offset=".75" stop-color="#0044CC" stop-opacity=".65"/><stop offset=".88" stop-color="#0044CC"/><stop offset=".95" stop-color="#0044CC" stop-opacity=".6"/><stop offset="1" stop-color="#0044CC" stop-opacity=".05"/></linearGradient><linearGradient id="g9" gradientUnits="userSpaceOnUse" x1="1978.8" y1="897.9" x2="2558.7" y2="1018.5"><stop offset="0" stop-color="#FF8A00" stop-opacity=".05"/><stop offset=".06" stop-color="#FF8A00" stop-opacity=".35"/><stop offset=".16" stop-color="#FF8A00"/><stop offset=".28" stop-color="#FF8A00" stop-opacity=".85"/><stop offset=".42" stop-color="#FF8A00" stop-opacity=".35"/><stop offset=".5" stop-color="#FF8A00" stop-opacity=".22"/><stop offset=".58" stop-color="#9DB8EE" stop-opacity=".4"/><stop offset=".75" stop-color="#0044CC" stop-opacity=".65"/><stop offset=".88" stop-color="#0044CC"/><stop offset=".95" stop-color="#0044CC" stop-opacity=".6"/><stop offset="1" stop-color="#0044CC" stop-opacity=".05"/></linearGradient><linearGradient id="g10" gradientUnits="userSpaceOnUse" x1="1978.8" y1="897.9" x2="2646" y2="1109"><stop offset="0" stop-color="#FF8A00" stop-opacity=".05"/><stop offset=".06" stop-color="#FF8A00" stop-opacity=".35"/><stop offset=".16" stop-color="#FF8A00"/><stop offset=".28" stop-color="#FF8A00" stop-opacity=".85"/><stop offset=".42" stop-color="#FF8A00" stop-opacity=".35"/><stop offset=".5" stop-color="#FF8A00" stop-opacity=".22"/><stop offset=".58" stop-color="#9DB8EE" stop-opacity=".4"/><stop offset=".75" stop-color="#0044CC" stop-opacity=".65"/><stop offset=".88" stop-color="#0044CC"/><stop offset=".95" stop-color="#0044CC" stop-opacity=".6"/><stop offset="1" stop-color="#0044CC" stop-opacity=".05"/></linearGradient><linearGradient id="g11" gradientUnits="userSpaceOnUse" x1="1978.8" y1="897.9" x2="2323.8" y2="1126.8"><stop offset="0" stop-color="#FF8A00" stop-opacity=".05"/><stop offset=".06" stop-color="#FF8A00" stop-opacity=".35"/><stop offset=".16" stop-color="#FF8A00"/><stop offset=".28" stop-color="#FF8A00" stop-opacity=".85"/><stop offset=".42" stop-color="#FF8A00" stop-opacity=".35"/><stop offset=".5" stop-color="#FF8A00" stop-opacity=".22"/><stop offset=".58" stop-color="#9DB8EE" stop-opacity=".4"/><stop offset=".75" stop-color="#0044CC" stop-opacity=".65"/><stop offset=".88" stop-color="#0044CC"/><stop offset=".95" stop-color="#0044CC" stop-opacity=".6"/><stop offset="1" stop-color="#0044CC" stop-opacity=".05"/></linearGradient><linearGradient id="mf" x1="0" y1="0" x2="0" y2="1"><stop offset="0" stop-color="#fff" stop-opacity="1"/><stop offset=".12" stop-color="#fff" stop-opacity=".97"/><stop offset="1" stop-color="#fff" stop-opacity="0"/></linearGradient><linearGradient id="mb" x1="0" y1="0" x2="0" y2="1"><stop offset="0" stop-color="#fff" stop-opacity="0"/><stop offset="1" stop-color="#fff" stop-opacity=".9"/></linearGradient></defs><path d="M1795 740.2h29.64M1933.3 740.2h24.71M1982.7 740.2h4.95M2007.4 740.2h44.46M2101.2 740.2h79.03M2328.4 740.2h14.83M2456.8 740.2h256.84M1792.5 744.4h49.40M1881.4 744.4h9.89M1921 744.4h39.52M1975.3 744.4h14.83M2014.8 744.4h44.46M2103.7 744.4h83.97M2321 744.4h24.71M2454.4 744.4h261.78M2750.7 744.4h0.01M1795 748.7h59.28M1869.1 748.7h44.46M1923.4 748.7h34.58M1972.8 748.7h14.83M2017.3 748.7h9.89M2042 748.7h14.83M2106.2 748.7h74.10M2313.6 748.7h34.58M2437.1 748.7h0.01M2456.8 748.7h311.17M1787.6 752.9h133.36M2108.6 752.9h69.16M2311.1 752.9h49.40M2439.6 752.9h330.92M1780.2 757.2h148.18M2046.9 757.2h19.77M2111.1 757.2h59.28M2308.7 757.2h54.34M2387.7 757.2h0.01M2412.4 757.2h355.62M1782.7 761.4h148.18M1940.7 761.4h14.83M1975.3 761.4h24.71M2009.9 761.4h9.89M2049.4 761.4h19.77M2108.6 761.4h54.34M2306.2 761.4h64.22M2405 761.4h365.50M1790.1 765.7h227.20M2051.8 765.7h19.77M2106.2 765.7h49.40M2303.7 765.7h69.16M2387.7 765.7h0.01M2397.6 765.7h370.44M1792.5 769.9h227.20M2049.4 769.9h24.71M2108.6 769.9h49.40M2301.3 769.9h69.16M2385.2 769.9h385.25M1785.1 774.2h222.26M2046.9 774.2h29.64M2106.2 774.2h44.46M2190.1 774.2h24.71M2298.8 774.2h19.77M2333.4 774.2h29.64M2377.8 774.2h390.19M1782.7 778.4h217.33M2049.4 778.4h4.95M2108.6 778.4h39.52M2192.6 778.4h19.77M2296.3 778.4h19.77M2335.8 778.4h19.77M2370.4 778.4h400.07M1790.1 782.7h212.39M2042 782.7h19.77M2106.2 782.7h34.58M2195.1 782.7h14.83M2293.9 782.7h19.77M2333.4 782.7h434.64M1792.5 786.9h207.45M2034.6 786.9h29.64M2108.6 786.9h29.64M2197.5 786.9h9.89M2291.4 786.9h19.77M2330.9 786.9h439.58M1795 791.2h197.57M2042 791.2h24.71M2111.1 791.2h19.77M2288.9 791.2h19.77M2328.4 791.2h439.58M1787.6 795.4h202.51M2054.3 795.4h9.89M2113.6 795.4h19.77M2281.5 795.4h24.71M2326 795.4h439.58M1785.1 799.7h202.51M2017.3 799.7h0.01M2037 799.7h0.01M2056.8 799.7h9.89M2116 799.7h14.83M2279 799.7h24.71M2323.5 799.7h434.64M1787.6 803.9h197.57M2118.5 803.9h9.89M2281.5 803.9h19.77M2326 803.9h429.70M1785.1 808.2h197.57M2037 808.2h14.83M2121 808.2h4.95M2279 808.2h24.71M2323.5 808.2h424.76M1782.7 812.5h197.57M2039.5 812.5h14.83M2128.4 812.5h0.01M2276.6 812.5h29.64M2326 812.5h370.44M2721.1 812.5h14.83M1790.1 816.7h29.64M1859.2 816.7h123.48M2037 816.7h19.77M2071.6 816.7h0.01M2279 816.7h24.71M2343.2 816.7h340.80M2718.6 816.7h4.95M1797.5 821.0h14.83M1861.7 821.0h118.55M2034.6 821.0h34.58M2276.6 821.0h24.71M2340.8 821.0h321.05M2716.1 821.0h4.95M1874 825.2h108.67M2037 825.2h34.58M2244.5 825.2h0.01M2293.9 825.2h4.95M2333.4 825.2h321.05M2713.7 825.2h9.89M1802.4 829.5h0.01M1812.3 829.5h0.01M1876.5 829.5h113.61M2039.5 829.5h34.58M2242 829.5h4.95M2296.3 829.5h4.95M2326 829.5h325.98M2711.2 829.5h9.89M1800 833.7h0.01M1879 833.7h118.55M2042 833.7h34.58M2244.5 833.7h4.95M2284 833.7h0.01M2298.8 833.7h0.01M2323.5 833.7h325.98M2708.7 833.7h9.89M1792.5 838.0h0.01M1881.4 838.0h123.48M2039.5 838.0h39.52M2246.9 838.0h0.01M2281.5 838.0h4.95M2321 838.0h325.98M2711.2 838.0h9.89M1785.1 842.2h0.01M1883.9 842.2h128.42M2032.1 842.2h54.34M2249.4 842.2h0.01M2284 842.2h360.56M2708.7 842.2h4.95M1876.5 846.5h0.01M1886.4 846.5h128.42M2034.6 846.5h59.28M2232.1 846.5h0.01M2251.9 846.5h0.01M2271.6 846.5h380.31M2711.2 846.5h4.95M1893.8 850.7h123.48M2032.1 850.7h59.28M2234.6 850.7h0.01M2249.4 850.7h4.95M2269.2 850.7h385.25M2708.7 850.7h0.01M1891.3 855.0h123.48M2029.6 855.0h59.28M2232.1 855.0h0.01M2246.9 855.0h9.89M2271.6 855.0h385.25M1893.8 859.2h197.57M2264.2 859.2h395.13M1901.2 863.5h177.81M2093.8 863.5h0.01M2256.8 863.5h400.07M1903.7 867.7h167.94M2091.4 867.7h4.95M2254.3 867.7h400.07M1906.1 872.0h158.06M2093.8 872.0h4.95M2246.9 872.0h409.95M1903.7 876.2h158.06M2254.3 876.2h400.07M1901.2 880.5h158.06M2256.8 880.5h83.97M2370.4 880.5h24.71M2414.9 880.5h237.08M1903.7 884.8h148.18M2259.3 884.8h34.58M2303.7 884.8h34.58M2372.9 884.8h14.83M2412.4 884.8h237.08M1901.2 889.0h148.18M2256.8 889.0h34.58M2306.2 889.0h29.64M2375.3 889.0h14.83M2409.9 889.0h237.08M1903.7 893.3h143.24M2234.6 893.3h29.64M2293.9 893.3h0.01M2313.6 893.3h19.77M2377.8 893.3h9.89M2412.4 893.3h227.20M2664.3 893.3h4.95M1901.2 897.5h148.18M2237.1 897.5h24.71M2296.3 897.5h0.01M2316.1 897.5h14.83M2380.3 897.5h9.89M2419.8 897.5h217.33M2661.8 897.5h0.01M1903.7 901.8h143.24M2234.6 901.8h19.77M2303.7 901.8h0.01M2318.5 901.8h74.10M2417.3 901.8h217.33M1901.2 906.0h143.24M2237.1 906.0h14.83M2321 906.0h9.89M2340.8 906.0h54.34M2414.9 906.0h207.45M2661.8 906.0h0.01M1903.7 910.3h133.36M2234.6 910.3h14.83M2323.5 910.3h0.01M2338.3 910.3h54.34M2417.3 910.3h182.75M2619.8 910.3h0.01M2659.3 910.3h0.01M1906.1 914.5h128.42M2237.1 914.5h9.89M2340.8 914.5h54.34M2419.8 914.5h177.81M2622.3 914.5h0.01M2651.9 914.5h9.89M1908.6 918.8h128.42M2259.3 918.8h24.71M2367.9 918.8h232.14M2624.8 918.8h0.01M2649.5 918.8h9.89M1911.1 923.0h123.48M2242 923.0h44.46M2365.5 923.0h232.14M2627.2 923.0h0.01M2642.1 923.0h14.83M1918.5 927.3h113.61M2239.5 927.3h44.46M2363 927.3h237.08M2639.6 927.3h4.95M1921 931.5h103.73M2237.1 931.5h54.34M2360.5 931.5h242.02M1923.4 935.8h93.85M2234.6 935.8h108.67M2363 935.8h242.02M1925.9 940.0h93.85M2232.1 940.0h370.44M1928.4 944.3h0.01M1938.2 944.3h44.46M2022.2 944.3h0.01M2229.6 944.3h375.37M1930.8 948.5h0.01M1945.7 948.5h29.64M2019.7 948.5h4.95M2222.2 948.5h128.42M2365.5 948.5h237.08M1933.3 952.8h0.01M1948.1 952.8h24.71M2022.2 952.8h0.01M2219.8 952.8h128.42M2367.9 952.8h237.08M1935.8 957.1h0.01M1950.6 957.1h24.71M2217.3 957.1h133.36M2370.4 957.1h44.46M2449.4 957.1h153.12M1953.1 961.3h19.77M2214.8 961.3h138.30M2372.9 961.3h49.40M2461.8 961.3h143.24M1797.5 965.6h0.01M1960.5 965.6h14.83M2014.8 965.6h0.01M2024.7 965.6h4.95M2212.4 965.6h148.18M2375.3 965.6h49.40M2464.2 965.6h128.42M1958 969.8h14.83M1997.5 969.8h9.89M2037 969.8h0.01M2214.8 969.8h143.24M2377.8 969.8h44.46M2466.7 969.8h39.52M2521 969.8h64.22M1955.5 974.1h19.77M2000 974.1h4.95M2049.4 974.1h4.95M2212.4 974.1h148.18M2380.3 974.1h39.52M2469.2 974.1h29.64M2528.5 974.1h44.46M1962.9 978.3h34.58M2037 978.3h0.01M2051.8 978.3h0.01M2066.7 978.3h0.01M2214.8 978.3h148.18M2382.8 978.3h34.58M2471.7 978.3h24.71M2530.9 978.3h39.52M2585.3 978.3h0.01M1975.3 982.6h24.71M2212.4 982.6h153.12M2385.2 982.6h19.77M2474.1 982.6h9.89M2533.4 982.6h29.64M2607.5 982.6h0.01M1987.6 986.8h24.71M2214.8 986.8h153.12M2387.7 986.8h14.83M2476.6 986.8h4.95M2540.8 986.8h24.71M2605 986.8h0.01M2000 991.1h14.83M2212.4 991.1h158.06M2390.2 991.1h4.95M2479.1 991.1h4.95M2543.3 991.1h24.71M2612.4 991.1h0.01M2007.4 995.3h4.95M2214.8 995.3h163M2481.5 995.3h0.01M2545.7 995.3h24.71M2614.9 995.3h0.01M2014.8 999.6h0.01M2044.4 999.6h14.83M2217.3 999.6h182.75M2484 999.6h0.01M2543.3 999.6h0.01M2558.1 999.6h4.95M2042 1003.8h39.52M2219.8 1003.8h177.81M2481.5 1003.8h4.95M2540.8 1003.8h0.01M2609.9 1003.8h0.01M2034.6 1008.1h49.40M2222.2 1008.1h172.88M2484 1008.1h4.95M2543.3 1008.1h0.01M2612.4 1008.1h4.95M2037 1012.3h54.34M2229.6 1012.3h163M2486.5 1012.3h0.01M2545.7 1012.3h0.01M2614.9 1012.3h4.95M2039.5 1016.6h59.28M2237.1 1016.6h29.64M2276.6 1016.6h113.61M2533.4 1016.6h0.01M2548.2 1016.6h4.95M2587.7 1016.6h9.89M2037 1020.9h69.16M2288.9 1020.9h98.79M2535.9 1020.9h4.95M2555.6 1020.9h0.01M2585.3 1020.9h9.89M2034.6 1025.1h69.16M2291.4 1025.1h93.85M2543.3 1025.1h0.01M2577.8 1025.1h14.83M2032.1 1029.4h74.10M2288.9 1029.4h88.91M2545.7 1029.4h0.01M2575.4 1029.4h19.77M2605 1029.4h9.89M2624.8 1029.4h0.01M2029.6 1033.6h79.03M2286.4 1033.6h88.91M2548.2 1033.6h4.95M2572.9 1033.6h19.77M2602.5 1033.6h0.01M2642.1 1033.6h0.01M2027.1 1037.9h98.79M2288.9 1037.9h79.03M2555.6 1037.9h0.01M2575.4 1037.9h14.83M2600.1 1037.9h0.01M2649.5 1037.9h4.95M2029.6 1042.1h108.67M2291.4 1042.1h74.10M2558.1 1042.1h0.01M2587.7 1042.1h0.01M2602.5 1042.1h4.95M2647 1042.1h24.71M2696.4 1042.1h0.01M2027.1 1046.4h123.48M2293.9 1046.4h69.16M2560.6 1046.4h4.95M2605 1046.4h4.95M2659.3 1046.4h14.83M2689 1046.4h4.95M2029.6 1050.6h123.48M2296.3 1050.6h69.16M2568 1050.6h0.01M2577.8 1050.6h0.01M2607.5 1050.6h0.01M2656.9 1050.6h19.77M2032.1 1054.9h118.55M2298.8 1054.9h69.16M2585.3 1054.9h0.01M2609.9 1054.9h0.01M2659.3 1054.9h19.77M2034.6 1059.1h113.61M2301.3 1059.1h69.16M2602.5 1059.1h0.01M2681.6 1059.1h4.95M2037 1063.4h108.67M2303.7 1063.4h64.22M2039.5 1067.6h103.73M2301.3 1067.6h69.16M2637.1 1067.6h9.89M2042 1071.9h98.79M2298.8 1071.9h69.16M2634.6 1071.9h9.89M2669.2 1071.9h0.01M2044.4 1076.1h98.79M2296.3 1076.1h74.10M2395.1 1076.1h4.95M2622.3 1076.1h24.71M2666.7 1076.1h4.95M2051.8 1080.4h88.91M2293.9 1080.4h74.10M2387.7 1080.4h9.89M2614.9 1080.4h39.52M2664.3 1080.4h9.89M2059.2 1084.6h79.03M2296.3 1084.6h64.22M2390.2 1084.6h4.95M2607.5 1084.6h69.16M2770.5 1084.6h0.01M2056.8 1088.9h79.03M2298.8 1088.9h59.28M2387.7 1088.9h4.95M2605 1088.9h74.10M2059.2 1093.2h74.10M2301.3 1093.2h54.34M2390.2 1093.2h4.95M2592.7 1093.2h88.91M2056.8 1097.4h74.10M2298.8 1097.4h54.34M2387.7 1097.4h4.95M2590.2 1097.4h98.79M2059.2 1101.7h59.28M2301.3 1101.7h54.34M2385.2 1101.7h4.95M2587.7 1101.7h103.73M2056.8 1105.9h54.34M2303.7 1105.9h49.40M2387.7 1105.9h0.01M2585.3 1105.9h108.67M2054.3 1110.2h54.34M2306.2 1110.2h39.52M2587.7 1110.2h108.67M2056.8 1114.4h54.34M2308.7 1114.4h39.52M2585.3 1114.4h108.67M2054.3 1118.7h54.34M2311.1 1118.7h34.58M2587.7 1118.7h108.67M2056.8 1122.9h49.40M2313.6 1122.9h29.64M2590.2 1122.9h103.73M2054.3 1127.2h54.34M2316.1 1127.2h19.77M2592.7 1127.2h103.73M2056.8 1131.4h44.46M2313.6 1131.4h19.77M2590.2 1131.4h24.71M2644.5 1131.4h44.46M2054.3 1135.7h44.46M2316.1 1135.7h4.95M2592.7 1135.7h4.95M2651.9 1135.7h34.58M2051.8 1139.9h39.52M2659.3 1139.9h24.71M2758.1 1139.9h0.01M2049.4 1144.2h39.52M2661.8 1144.2h24.71M2760.6 1144.2h0.01M2046.9 1148.4h39.52M2664.3 1148.4h19.77M2763.1 1148.4h0.01M2049.4 1152.7h29.64M2760.6 1152.7h9.89M2046.9 1156.9h24.71M2763.1 1156.9h0.01M2049.4 1161.2h19.77M2676.6 1161.2h4.95M2755.6 1161.2h0.01M2046.9 1165.5h19.77M2679.1 1165.5h0.01M2753.2 1165.5h4.95M2044.4 1169.7h19.77M2750.7 1169.7h0.01M2051.8 1174.0h14.83M2738.4 1174.0h9.89M2044.4 1178.2h14.83M2740.8 1178.2h4.95M2042 1182.5h14.83M2743.3 1182.5h0.01M2044.4 1186.7h14.83M2042 1191.0h19.77M2044.4 1195.2h9.89M2454.4 1195.2h0.01M2042 1199.5h14.83M2044.4 1203.7h14.83M2042 1208.0h14.83M2044.4 1212.2h9.89M2046.9 1216.5h9.89M2054.3 1220.7h9.89" fill="none" stroke="#c0c0c0" stroke-width="2.25" stroke-linecap="round" stroke-dasharray="0 4.939"/><rect x="1770" y="734" width="1010" height="26" fill="url(#mf)"/><rect x="1770" y="1204" width="1010" height="20" fill="url(#mb)"/><g fill="none" stroke-width="1.4" stroke-linecap="round"><path d="M1978.8 897.9Q1974.0 854.7 1947.4 833.5" stroke="url(#g0)"/><path d="M1978.8 897.9Q2179.4 762.9 2331.6 813.7" stroke="url(#g1)"/><path d="M1978.8 897.9Q2150.4 806.4 2272 847" stroke="url(#g2)"/><path d="M1978.8 897.9Q2160.0 804.0 2287.6 850" stroke="url(#g3)"/><path d="M1978.8 897.9Q2169.7 801.6 2312.7 848" stroke="url(#g4)"/><path d="M1978.8 897.9Q2184.2 796.8 2347.5 859.6" stroke="url(#g5)"/><path d="M1978.8 897.9Q2145.5 827.2 2263.4 866.8" stroke="url(#g6)"/><path d="M1978.8 897.9Q2140.7 845.1 2246 886.6" stroke="url(#g7)"/><path d="M1978.8 897.9Q2318.5 846.5 2659 901" stroke="url(#g8)"/><path d="M1978.8 897.9Q2268.8 859.6 2558.7 1018.5" stroke="url(#g9)"/><path d="M1978.8 897.9Q2307.4 841.2 2646 1109" stroke="url(#g10)"/><path d="M1978.8 897.9Q2179.4 883.7 2323.8 1126.8" stroke="url(#g11)"/></g><g fill="#0044CC"><circle cx="1947.4" cy="833.5" r="4.3"/><circle cx="2331.6" cy="813.7" r="4.3"/><circle cx="2272" cy="847" r="4.3"/><circle cx="2287.6" cy="850" r="4.3"/><circle cx="2312.7" cy="848" r="4.3"/><circle cx="2347.5" cy="859.6" r="4.3"/><circle cx="2263.4" cy="866.8" r="4.3"/><circle cx="2246" cy="886.6" r="4.3"/><circle cx="2659" cy="901" r="4.3"/><circle cx="2558.7" cy="1018.5" r="4.3"/><circle cx="2646" cy="1109" r="4.3"/><circle cx="2323.8" cy="1126.8" r="4.3"/></g><circle cx="1978.8" cy="897.9" r="5.6" fill="#FF8A00"/></svg><div class="a" style="left:2581px;top:1212px;width:13px;height:13px;border-radius:50%;background:#FF5C00"></div><span class="t" style="left:2600.45px;top:1207.0px;font-size:20px;line-height:26px;color:#98A2B3;letter-spacing:0.16px;">Script Host</span><div class="a" style="left:2714px;top:1212px;width:13px;height:13px;border-radius:50%;background:#0044CC"></div><span class="t" style="left:2731.6px;top:1207.0px;font-size:20px;line-height:26px;color:#98A2B3;letter-spacing:0.03px;">User</span><div class="a" style="left:648px;top:1310px;width:1074px;height:700px;box-sizing:border-box;border:2px solid #E4E7EC;border-radius:30px;background:#fff"></div><svg class="a" style="left:697.0px;top:1362.0px" width="30" height="30" viewBox="0 0 24 24" fill="none" stroke="#667085" stroke-width="1.7" stroke-linecap="round" stroke-linejoin="round" ><ellipse cx="12" cy="5" rx="9" ry="3"/><path d="M3 5V19A9 3 0 0 0 21 19V5"/><path d="M3 12A9 3 0 0 0 21 12"/></svg><span class="t" style="left:743.2px;top:1356.0px;font-size:32px;line-height:42px;color:#475467;letter-spacing:1.24px;-webkit-text-stroke:0.4px #475467;">Data types collected</span><span class="t" style="left:710.9px;top:1445.8px;font-size:24px;line-height:31px;color:#667085;font-weight:700;letter-spacing:0.47px;">Data Type</span><svg class="a" style="left:837.0px;top:1451.0px" width="22" height="22" viewBox="0 0 24 24" fill="none" stroke="#667085" stroke-width="2.2" stroke-linecap="round" stroke-linejoin="round" ><path d="M12 5v14"/><path d="m19 12-7 7-7-7"/></svg><div class="a" style="left:1050px;top:1446px;width:2px;height:32px;background:#E4E7EC"></div><div class="a" style="left:1454px;top:1446px;width:2px;height:32px;background:#E4E7EC"></div><span class="t" style="left:1100.4px;top:1445.8px;font-size:24px;line-height:31px;color:#667085;font-weight:700;letter-spacing:0.15px;">Vendors collecting</span><span class="t" style="left:1502.7px;top:1445.8px;font-size:24px;line-height:31px;color:#667085;font-weight:700;letter-spacing:0.41px;">Risk level</span><div class="a" style="left:650px;top:1633px;width:1070px;height:2px;background:#E4E7EC"></div><span class="t" style="left:710.15px;top:1553.0px;font-size:28px;line-height:36px;color:#475467;letter-spacing:0.37px;">Email address</span><div class="a" style="left:1116.3px;top:1530.3px;width:79.3px;height:79.3px;box-sizing:border-box;border:1.5px solid #E4E7EC;border-radius:18px;background:#fff"></div><svg class="a" style="left:1132px;top:1546px" width="48" height="48" viewBox="0 0 24 24"><path fill="#5A86CB" d="M23.49 12.27c0-.79-.07-1.54-.19-2.27H12v4.51h6.47c-.29 1.48-1.14 2.73-2.4 3.58v3h3.86c2.26-2.09 3.56-5.17 3.56-8.82z"/><path fill="#34A853" d="M12 24c3.24 0 5.95-1.08 7.93-2.91l-3.86-3c-1.08.72-2.45 1.16-4.07 1.16-3.13 0-5.78-2.11-6.73-4.96H1.29v3.09C3.26 21.3 7.31 24 12 24z"/><path fill="#FBBC05" d="M5.27 14.29c-.25-.72-.38-1.49-.38-2.29s.14-1.57.38-2.29V6.62H1.29C.47 8.24 0 10.06 0 12s.47 3.76 1.29 5.38l3.98-3.09z"/><path fill="#EA4335" d="M12 4.75c1.77 0 3.35.61 4.6 1.8l3.42-3.42C17.95 1.19 15.24 0 12 0 7.31 0 3.26 2.7 1.29 6.62l3.98 3.09c.95-2.85 3.6-4.96 6.73-4.96z"/></svg><div class="a" style="left:1176.4px;top:1530.3px;width:79.3px;height:79.3px;box-sizing:border-box;border:1.5px solid #E4E7EC;border-radius:18px;background:#fff"></div><svg class="a" style="left:1196.5px;top:1545.5px" width="39" height="49.1" viewBox="0 0 54 68"><path d="M27 2.8 L50 11.9 Q51.2 12.4 51.2 13.8 V36 C51.2 49.5 38 60 27 65.3 C16 60 2.8 49.5 2.8 36 V13.8 Q2.8 12.4 4 11.9 Z" fill="none" stroke="#0044BB" stroke-width="5" stroke-linejoin="round"/><g fill="#0044BB"><path d="M15.3 53.5 C16.8 45.5 20.5 37 26.5 29.5 L31 31.5 C26 39 22.8 49.5 24.3 62 C20.5 59.8 17.3 56.5 15.3 53.5Z"/><path d="M7.4 24.2 C11 20.5 18 18.6 23 21.1 C25.5 22.4 27.5 24.5 28.5 27 L24.2 30.2 C20 26.7 14 24.9 7.4 24.2Z"/><path d="M22.4 14.9 C27.5 16.3 32.2 20.5 32.6 25.5 L28.4 26.2 C28 21.5 26 18 22.4 14.9Z"/><path d="M31.3 25.4 C35 22.2 41.5 22.8 45.9 28.7 C41.5 27.5 37 27.5 33 29.5Z"/><path d="M26 27.6 C21 27.6 16.3 31.5 15.8 36.7 C18.5 34 22 32.2 26.8 31.4Z"/><path d="M29.6 30 C29.1 36 28.6 42.5 30.4 48.1 C34.4 44 35.8 37 33.8 30Z"/><path d="M33.3 28 C39.7 29.3 44.2 37 41.7 46.2 C40.5 40.5 38 35.7 33.6 32.4Z"/><circle cx="29.6" cy="28.2" r="3.2"/></g></svg><div class="a" style="left:1236.3px;top:1530.3px;width:79.3px;height:79.3px;box-sizing:border-box;border:1.5px solid #E4E7EC;border-radius:18px;background:#fff"></div><span class="t" style="left:1255.9px;top:1552.5px;font-size:28px;line-height:36px;color:#667085;letter-spacing:2.8px;-webkit-text-stroke:0.3px #667085;">+3</span><div class="a" style="left:1504.5px;top:1550.2px;width:83px;height:39.5px;box-sizing:border-box;border:2px solid #FECDCA;border-radius:20px;background:#FEF3F2"></div><span class="t" style="left:1519.5px;top:1554.2px;font-size:24px;line-height:31px;color:#B42318;letter-spacing:1.02px;-webkit-text-stroke:0.5px #B42318;">High</span><div class="a" style="left:650px;top:1761px;width:1070px;height:2px;background:#E4E7EC"></div><span class="t" style="left:709.9px;top:1681.0px;font-size:28px;line-height:36px;color:#475467;letter-spacing:0.38px;">IP address</span><div class="a" style="left:1116.3px;top:1658.3px;width:79.3px;height:79.3px;box-sizing:border-box;border:1.5px solid #E4E7EC;border-radius:18px;background:#fff"></div><svg class="a" style="left:1132px;top:1674px" width="48" height="48" viewBox="0 0 24 24"><path fill="#5A86CB" d="M23.49 12.27c0-.79-.07-1.54-.19-2.27H12v4.51h6.47c-.29 1.48-1.14 2.73-2.4 3.58v3h3.86c2.26-2.09 3.56-5.17 3.56-8.82z"/><path fill="#34A853" d="M12 24c3.24 0 5.95-1.08 7.93-2.91l-3.86-3c-1.08.72-2.45 1.16-4.07 1.16-3.13 0-5.78-2.11-6.73-4.96H1.29v3.09C3.26 21.3 7.31 24 12 24z"/><path fill="#FBBC05" d="M5.27 14.29c-.25-.72-.38-1.49-.38-2.29s.14-1.57.38-2.29V6.62H1.29C.47 8.24 0 10.06 0 12s.47 3.76 1.29 5.38l3.98-3.09z"/><path fill="#EA4335" d="M12 4.75c1.77 0 3.35.61 4.6 1.8l3.42-3.42C17.95 1.19 15.24 0 12 0 7.31 0 3.26 2.7 1.29 6.62l3.98 3.09c.95-2.85 3.6-4.96 6.73-4.96z"/></svg><div class="a" style="left:1176.4px;top:1658.3px;width:79.3px;height:79.3px;box-sizing:border-box;border:1.5px solid #E4E7EC;border-radius:18px;background:#fff"></div><svg class="a" style="left:1196.5px;top:1673.5px" width="39" height="49.1" viewBox="0 0 54 68"><path d="M27 2.8 L50 11.9 Q51.2 12.4 51.2 13.8 V36 C51.2 49.5 38 60 27 65.3 C16 60 2.8 49.5 2.8 36 V13.8 Q2.8 12.4 4 11.9 Z" fill="none" stroke="#0044BB" stroke-width="5" stroke-linejoin="round"/><g fill="#0044BB"><path d="M15.3 53.5 C16.8 45.5 20.5 37 26.5 29.5 L31 31.5 C26 39 22.8 49.5 24.3 62 C20.5 59.8 17.3 56.5 15.3 53.5Z"/><path d="M7.4 24.2 C11 20.5 18 18.6 23 21.1 C25.5 22.4 27.5 24.5 28.5 27 L24.2 30.2 C20 26.7 14 24.9 7.4 24.2Z"/><path d="M22.4 14.9 C27.5 16.3 32.2 20.5 32.6 25.5 L28.4 26.2 C28 21.5 26 18 22.4 14.9Z"/><path d="M31.3 25.4 C35 22.2 41.5 22.8 45.9 28.7 C41.5 27.5 37 27.5 33 29.5Z"/><path d="M26 27.6 C21 27.6 16.3 31.5 15.8 36.7 C18.5 34 22 32.2 26.8 31.4Z"/><path d="M29.6 30 C29.1 36 28.6 42.5 30.4 48.1 C34.4 44 35.8 37 33.8 30Z"/><path d="M33.3 28 C39.7 29.3 44.2 37 41.7 46.2 C40.5 40.5 38 35.7 33.6 32.4Z"/><circle cx="29.6" cy="28.2" r="3.2"/></g></svg><div class="a" style="left:1236.3px;top:1658.3px;width:79.3px;height:79.3px;box-sizing:border-box;border:1.5px solid #E4E7EC;border-radius:18px;background:#fff"></div><span class="t" style="left:1255.9px;top:1680.5px;font-size:28px;line-height:36px;color:#667085;letter-spacing:2.8px;-webkit-text-stroke:0.3px #667085;">+3</span><div class="a" style="left:1504.5px;top:1678.2px;width:121px;height:39.5px;box-sizing:border-box;border:2px solid #FEDF89;border-radius:20px;background:#FFFAEB"></div><span class="t" style="left:1519.5px;top:1682.2px;font-size:24px;line-height:31px;color:#B54708;letter-spacing:1.02px;-webkit-text-stroke:0.5px #B54708;">Medium</span><div class="a" style="left:650px;top:1889px;width:1070px;height:2px;background:#E4E7EC"></div><span class="t" style="left:710.4px;top:1809.0px;font-size:28px;line-height:36px;color:#475467;letter-spacing:0.44px;">User agent</span><div class="a" style="left:1116.3px;top:1786.3px;width:79.3px;height:79.3px;box-sizing:border-box;border:1.5px solid #E4E7EC;border-radius:18px;background:#fff"></div><svg class="a" style="left:1132px;top:1802px" width="48" height="48" viewBox="0 0 24 24"><path fill="#5A86CB" d="M23.49 12.27c0-.79-.07-1.54-.19-2.27H12v4.51h6.47c-.29 1.48-1.14 2.73-2.4 3.58v3h3.86c2.26-2.09 3.56-5.17 3.56-8.82z"/><path fill="#34A853" d="M12 24c3.24 0 5.95-1.08 7.93-2.91l-3.86-3c-1.08.72-2.45 1.16-4.07 1.16-3.13 0-5.78-2.11-6.73-4.96H1.29v3.09C3.26 21.3 7.31 24 12 24z"/><path fill="#FBBC05" d="M5.27 14.29c-.25-.72-.38-1.49-.38-2.29s.14-1.57.38-2.29V6.62H1.29C.47 8.24 0 10.06 0 12s.47 3.76 1.29 5.38l3.98-3.09z"/><path fill="#EA4335" d="M12 4.75c1.77 0 3.35.61 4.6 1.8l3.42-3.42C17.95 1.19 15.24 0 12 0 7.31 0 3.26 2.7 1.29 6.62l3.98 3.09c.95-2.85 3.6-4.96 6.73-4.96z"/></svg><div class="a" style="left:1176.4px;top:1786.3px;width:79.3px;height:79.3px;box-sizing:border-box;border:1.5px solid #E4E7EC;border-radius:18px;background:#fff"></div><svg class="a" style="left:1196.5px;top:1801.5px" width="39" height="49.1" viewBox="0 0 54 68"><path d="M27 2.8 L50 11.9 Q51.2 12.4 51.2 13.8 V36 C51.2 49.5 38 60 27 65.3 C16 60 2.8 49.5 2.8 36 V13.8 Q2.8 12.4 4 11.9 Z" fill="none" stroke="#0044BB" stroke-width="5" stroke-linejoin="round"/><g fill="#0044BB"><path d="M15.3 53.5 C16.8 45.5 20.5 37 26.5 29.5 L31 31.5 C26 39 22.8 49.5 24.3 62 C20.5 59.8 17.3 56.5 15.3 53.5Z"/><path d="M7.4 24.2 C11 20.5 18 18.6 23 21.1 C25.5 22.4 27.5 24.5 28.5 27 L24.2 30.2 C20 26.7 14 24.9 7.4 24.2Z"/><path d="M22.4 14.9 C27.5 16.3 32.2 20.5 32.6 25.5 L28.4 26.2 C28 21.5 26 18 22.4 14.9Z"/><path d="M31.3 25.4 C35 22.2 41.5 22.8 45.9 28.7 C41.5 27.5 37 27.5 33 29.5Z"/><path d="M26 27.6 C21 27.6 16.3 31.5 15.8 36.7 C18.5 34 22 32.2 26.8 31.4Z"/><path d="M29.6 30 C29.1 36 28.6 42.5 30.4 48.1 C34.4 44 35.8 37 33.8 30Z"/><path d="M33.3 28 C39.7 29.3 44.2 37 41.7 46.2 C40.5 40.5 38 35.7 33.6 32.4Z"/><circle cx="29.6" cy="28.2" r="3.2"/></g></svg><div class="a" style="left:1236.3px;top:1786.3px;width:79.3px;height:79.3px;box-sizing:border-box;border:1.5px solid #E4E7EC;border-radius:18px;background:#fff"></div><span class="t" style="left:1255.9px;top:1808.5px;font-size:28px;line-height:36px;color:#667085;letter-spacing:2.8px;-webkit-text-stroke:0.3px #667085;">+3</span><div class="a" style="left:1504.5px;top:1806.2px;width:79px;height:39.5px;box-sizing:border-box;border:2px solid #ABEFC6;border-radius:20px;background:#ECFDF3"></div><span class="t" style="left:1519.5px;top:1810.2px;font-size:24px;line-height:31px;color:#067647;letter-spacing:1.0px;-webkit-text-stroke:0.5px #067647;">Low</span><div class="a" style="left:650px;top:1504px;width:1070px;height:2px;background:#E4E7EC"></div><div class="a" style="left:1743px;top:1310px;width:1073.5px;height:700px;box-sizing:border-box;border:2px solid #E4E7EC;border-radius:30px;background:#fff"></div><svg class="a" style="left:1790.0px;top:1361.3px" width="32.5" height="32.5" viewBox="0 0 24 24" fill="none" stroke="#667085" stroke-width="1.45" stroke-linecap="round" stroke-linejoin="round" ><path d="M15 2H6a2 2 0 0 0-2 2v16a2 2 0 0 0 2 2h12a2 2 0 0 0 2-2V7Z"/><path d="M14 2v4a2 2 0 0 0 2 2h4"/><path d="M10 9H8"/><path d="M16 13H8"/><path d="M16 17H8"/></svg><span class="t" style="left:1836.4px;top:1356.0px;font-size:32px;line-height:42px;color:#475467;letter-spacing:1.02px;-webkit-text-stroke:0.4px #475467;">Data collection by page</span><span class="t" style="left:1838.7px;top:1403.0px;font-size:28px;line-height:36px;color:#475467;letter-spacing:0.35px;">View which forms, fields, and vendors collect data on each page</span><div class="a" style="left:1790px;top:1486.3px;width:79.5px;height:79.5px;box-sizing:border-box;border:1.5px solid #E4E7EC;border-radius:18px;background:#fff"></div><svg class="a" style="left:1810.5px;top:1501.5px" width="39" height="49.1" viewBox="0 0 54 68"><path d="M27 2.8 L50 11.9 Q51.2 12.4 51.2 13.8 V36 C51.2 49.5 38 60 27 65.3 C16 60 2.8 49.5 2.8 36 V13.8 Q2.8 12.4 4 11.9 Z" fill="none" stroke="#0044BB" stroke-width="5" stroke-linejoin="round"/><g fill="#0044BB"><path d="M15.3 53.5 C16.8 45.5 20.5 37 26.5 29.5 L31 31.5 C26 39 22.8 49.5 24.3 62 C20.5 59.8 17.3 56.5 15.3 53.5Z"/><path d="M7.4 24.2 C11 20.5 18 18.6 23 21.1 C25.5 22.4 27.5 24.5 28.5 27 L24.2 30.2 C20 26.7 14 24.9 7.4 24.2Z"/><path d="M22.4 14.9 C27.5 16.3 32.2 20.5 32.6 25.5 L28.4 26.2 C28 21.5 26 18 22.4 14.9Z"/><path d="M31.3 25.4 C35 22.2 41.5 22.8 45.9 28.7 C41.5 27.5 37 27.5 33 29.5Z"/><path d="M26 27.6 C21 27.6 16.3 31.5 15.8 36.7 C18.5 34 22 32.2 26.8 31.4Z"/><path d="M29.6 30 C29.1 36 28.6 42.5 30.4 48.1 C34.4 44 35.8 37 33.8 30Z"/><path d="M33.3 28 C39.7 29.3 44.2 37 41.7 46.2 C40.5 40.5 38 35.7 33.6 32.4Z"/><circle cx="29.6" cy="28.2" r="3.2"/></g></svg><span class="t" style="left:1893.4px;top:1491.0px;font-size:28px;line-height:36px;color:#101828;letter-spacing:0.58px;-webkit-text-stroke:0.4px #101828;">cside | Stopping client-sid…</span><span class="t" style="left:1892.45px;top:1526.8px;font-size:28px;line-height:36px;color:#475467;letter-spacing:0.9px;">https://cside.dev/homepage</span><div class="a" style="left:2354.3px;top:1506.1px;width:101.3px;height:39.7px;box-sizing:border-box;border:2px solid #EAECF0;border-radius:20px;background:#F9FAFB"></div><span class="t" style="left:2368.8px;top:1511.0px;font-size:24px;line-height:31px;color:#344054;letter-spacing:0.49px;-webkit-text-stroke:0.3px #344054;">1 form</span><div class="a" style="left:2472px;top:1506.1px;width:144px;height:39.7px;box-sizing:border-box;border:2px solid #B2DDFF;border-radius:20px;background:#EFF8FF"></div><span class="t" style="left:2488.35px;top:1511.0px;font-size:24px;line-height:31px;color:#0044CC;letter-spacing:0.64px;-webkit-text-stroke:0.3px #0044CC;">4 vendors</span><svg class="a" style="left:2729.0px;top:1510.0px" width="30" height="30" viewBox="0 0 24 24" fill="none" stroke="#344054" stroke-width="2" stroke-linecap="round" stroke-linejoin="round" ><path d="m6 9 6 6 6-6"/></svg><div class="a" style="left:1744px;top:1588px;width:1069.4px;height:2px;background:#E4E7EC"></div><div class="a" style="left:1790px;top:1614.3px;width:79.5px;height:79.5px;box-sizing:border-box;border:1.5px solid #E4E7EC;border-radius:18px;background:#fff"></div><svg class="a" style="left:1810.5px;top:1629.5px" width="39" height="49.1" viewBox="0 0 54 68"><path d="M27 2.8 L50 11.9 Q51.2 12.4 51.2 13.8 V36 C51.2 49.5 38 60 27 65.3 C16 60 2.8 49.5 2.8 36 V13.8 Q2.8 12.4 4 11.9 Z" fill="none" stroke="#0044BB" stroke-width="5" stroke-linejoin="round"/><g fill="#0044BB"><path d="M15.3 53.5 C16.8 45.5 20.5 37 26.5 29.5 L31 31.5 C26 39 22.8 49.5 24.3 62 C20.5 59.8 17.3 56.5 15.3 53.5Z"/><path d="M7.4 24.2 C11 20.5 18 18.6 23 21.1 C25.5 22.4 27.5 24.5 28.5 27 L24.2 30.2 C20 26.7 14 24.9 7.4 24.2Z"/><path d="M22.4 14.9 C27.5 16.3 32.2 20.5 32.6 25.5 L28.4 26.2 C28 21.5 26 18 22.4 14.9Z"/><path d="M31.3 25.4 C35 22.2 41.5 22.8 45.9 28.7 C41.5 27.5 37 27.5 33 29.5Z"/><path d="M26 27.6 C21 27.6 16.3 31.5 15.8 36.7 C18.5 34 22 32.2 26.8 31.4Z"/><path d="M29.6 30 C29.1 36 28.6 42.5 30.4 48.1 C34.4 44 35.8 37 33.8 30Z"/><path d="M33.3 28 C39.7 29.3 44.2 37 41.7 46.2 C40.5 40.5 38 35.7 33.6 32.4Z"/><circle cx="29.6" cy="28.2" r="3.2"/></g></svg><span class="t" style="left:1893.4px;top:1619.0px;font-size:28px;line-height:36px;color:#101828;letter-spacing:0.58px;-webkit-text-stroke:0.4px #101828;">cside | Stopping client-sid…</span><span class="t" style="left:1892.45px;top:1654.8px;font-size:28px;line-height:36px;color:#475467;letter-spacing:0.9px;">https://cside.dev/homepage</span><div class="a" style="left:2354.3px;top:1634.1px;width:101.3px;height:39.7px;box-sizing:border-box;border:2px solid #EAECF0;border-radius:20px;background:#F9FAFB"></div><span class="t" style="left:2368.8px;top:1639.0px;font-size:24px;line-height:31px;color:#344054;letter-spacing:0.49px;-webkit-text-stroke:0.3px #344054;">1 form</span><div class="a" style="left:2472px;top:1634.1px;width:144px;height:39.7px;box-sizing:border-box;border:2px solid #B2DDFF;border-radius:20px;background:#EFF8FF"></div><span class="t" style="left:2488.35px;top:1639.0px;font-size:24px;line-height:31px;color:#0044CC;letter-spacing:0.64px;-webkit-text-stroke:0.3px #0044CC;">4 vendors</span><svg class="a" style="left:2729.0px;top:1638.0px" width="30" height="30" viewBox="0 0 24 24" fill="none" stroke="#344054" stroke-width="2" stroke-linecap="round" stroke-linejoin="round" ><path d="m6 9 6 6 6-6"/></svg><div class="a" style="left:1744px;top:1716px;width:1069.4px;height:2px;background:#E4E7EC"></div><div class="a" style="left:1790px;top:1742.3px;width:79.5px;height:79.5px;box-sizing:border-box;border:1.5px solid #E4E7EC;border-radius:18px;background:#fff"></div><svg class="a" style="left:1810.5px;top:1757.5px" width="39" height="49.1" viewBox="0 0 54 68"><path d="M27 2.8 L50 11.9 Q51.2 12.4 51.2 13.8 V36 C51.2 49.5 38 60 27 65.3 C16 60 2.8 49.5 2.8 36 V13.8 Q2.8 12.4 4 11.9 Z" fill="none" stroke="#0044BB" stroke-width="5" stroke-linejoin="round"/><g fill="#0044BB"><path d="M15.3 53.5 C16.8 45.5 20.5 37 26.5 29.5 L31 31.5 C26 39 22.8 49.5 24.3 62 C20.5 59.8 17.3 56.5 15.3 53.5Z"/><path d="M7.4 24.2 C11 20.5 18 18.6 23 21.1 C25.5 22.4 27.5 24.5 28.5 27 L24.2 30.2 C20 26.7 14 24.9 7.4 24.2Z"/><path d="M22.4 14.9 C27.5 16.3 32.2 20.5 32.6 25.5 L28.4 26.2 C28 21.5 26 18 22.4 14.9Z"/><path d="M31.3 25.4 C35 22.2 41.5 22.8 45.9 28.7 C41.5 27.5 37 27.5 33 29.5Z"/><path d="M26 27.6 C21 27.6 16.3 31.5 15.8 36.7 C18.5 34 22 32.2 26.8 31.4Z"/><path d="M29.6 30 C29.1 36 28.6 42.5 30.4 48.1 C34.4 44 35.8 37 33.8 30Z"/><path d="M33.3 28 C39.7 29.3 44.2 37 41.7 46.2 C40.5 40.5 38 35.7 33.6 32.4Z"/><circle cx="29.6" cy="28.2" r="3.2"/></g></svg><span class="t" style="left:1893.4px;top:1747.0px;font-size:28px;line-height:36px;color:#101828;letter-spacing:0.58px;-webkit-text-stroke:0.4px #101828;">cside | Stopping client-sid…</span><span class="t" style="left:1892.45px;top:1782.8px;font-size:28px;line-height:36px;color:#475467;letter-spacing:0.9px;">https://cside.dev/homepage</span><div class="a" style="left:2354.3px;top:1762.1px;width:101.3px;height:39.7px;box-sizing:border-box;border:2px solid #EAECF0;border-radius:20px;background:#F9FAFB"></div><span class="t" style="left:2368.8px;top:1767.0px;font-size:24px;line-height:31px;color:#344054;letter-spacing:0.49px;-webkit-text-stroke:0.3px #344054;">1 form</span><div class="a" style="left:2472px;top:1762.1px;width:144px;height:39.7px;box-sizing:border-box;border:2px solid #B2DDFF;border-radius:20px;background:#EFF8FF"></div><span class="t" style="left:2488.35px;top:1767.0px;font-size:24px;line-height:31px;color:#0044CC;letter-spacing:0.64px;-webkit-text-stroke:0.3px #0044CC;">4 vendors</span><svg class="a" style="left:2729.0px;top:1766.0px" width="30" height="30" viewBox="0 0 24 24" fill="none" stroke="#344054" stroke-width="2" stroke-linecap="round" stroke-linejoin="round" ><path d="m6 9 6 6 6-6"/></svg><div class="a" style="left:1744px;top:1844px;width:1069.4px;height:2px;background:#E4E7EC"></div><div class="a" style="left:1790px;top:1870.3px;width:79.5px;height:79.5px;box-sizing:border-box;border:1.5px solid #E4E7EC;border-radius:18px;background:#fff"></div><svg class="a" style="left:1810.5px;top:1885.5px" width="39" height="49.1" viewBox="0 0 54 68"><path d="M27 2.8 L50 11.9 Q51.2 12.4 51.2 13.8 V36 C51.2 49.5 38 60 27 65.3 C16 60 2.8 49.5 2.8 36 V13.8 Q2.8 12.4 4 11.9 Z" fill="none" stroke="#0044BB" stroke-width="5" stroke-linejoin="round"/><g fill="#0044BB"><path d="M15.3 53.5 C16.8 45.5 20.5 37 26.5 29.5 L31 31.5 C26 39 22.8 49.5 24.3 62 C20.5 59.8 17.3 56.5 15.3 53.5Z"/><path d="M7.4 24.2 C11 20.5 18 18.6 23 21.1 C25.5 22.4 27.5 24.5 28.5 27 L24.2 30.2 C20 26.7 14 24.9 7.4 24.2Z"/><path d="M22.4 14.9 C27.5 16.3 32.2 20.5 32.6 25.5 L28.4 26.2 C28 21.5 26 18 22.4 14.9Z"/><path d="M31.3 25.4 C35 22.2 41.5 22.8 45.9 28.7 C41.5 27.5 37 27.5 33 29.5Z"/><path d="M26 27.6 C21 27.6 16.3 31.5 15.8 36.7 C18.5 34 22 32.2 26.8 31.4Z"/><path d="M29.6 30 C29.1 36 28.6 42.5 30.4 48.1 C34.4 44 35.8 37 33.8 30Z"/><path d="M33.3 28 C39.7 29.3 44.2 37 41.7 46.2 C40.5 40.5 38 35.7 33.6 32.4Z"/><circle cx="29.6" cy="28.2" r="3.2"/></g></svg><span class="t" style="left:1893.4px;top:1875.0px;font-size:28px;line-height:36px;color:#101828;letter-spacing:0.58px;-webkit-text-stroke:0.4px #101828;">cside | Stopping client-sid…</span><span class="t" style="left:1892.45px;top:1910.8px;font-size:28px;line-height:36px;color:#475467;letter-spacing:0.9px;">https://cside.dev/homepage</span><div class="a" style="left:2354.3px;top:1890.1px;width:101.3px;height:39.7px;box-sizing:border-box;border:2px solid #EAECF0;border-radius:20px;background:#F9FAFB"></div><span class="t" style="left:2368.8px;top:1895.0px;font-size:24px;line-height:31px;color:#344054;letter-spacing:0.49px;-webkit-text-stroke:0.3px #344054;">1 form</span><div class="a" style="left:2472px;top:1890.1px;width:144px;height:39.7px;box-sizing:border-box;border:2px solid #B2DDFF;border-radius:20px;background:#EFF8FF"></div><span class="t" style="left:2488.35px;top:1895.0px;font-size:24px;line-height:31px;color:#0044CC;letter-spacing:0.64px;-webkit-text-stroke:0.3px #0044CC;">4 vendors</span><svg class="a" style="left:2729.0px;top:1894.0px" width="30" height="30" viewBox="0 0 24 24" fill="none" stroke="#344054" stroke-width="2" stroke-linecap="round" stroke-linejoin="round" ><path d="m6 9 6 6 6-6"/></svg><div class="a" style="left:1744px;top:1972px;width:1069.4px;height:2px;background:#E4E7EC"></div></main>
</body></html>
